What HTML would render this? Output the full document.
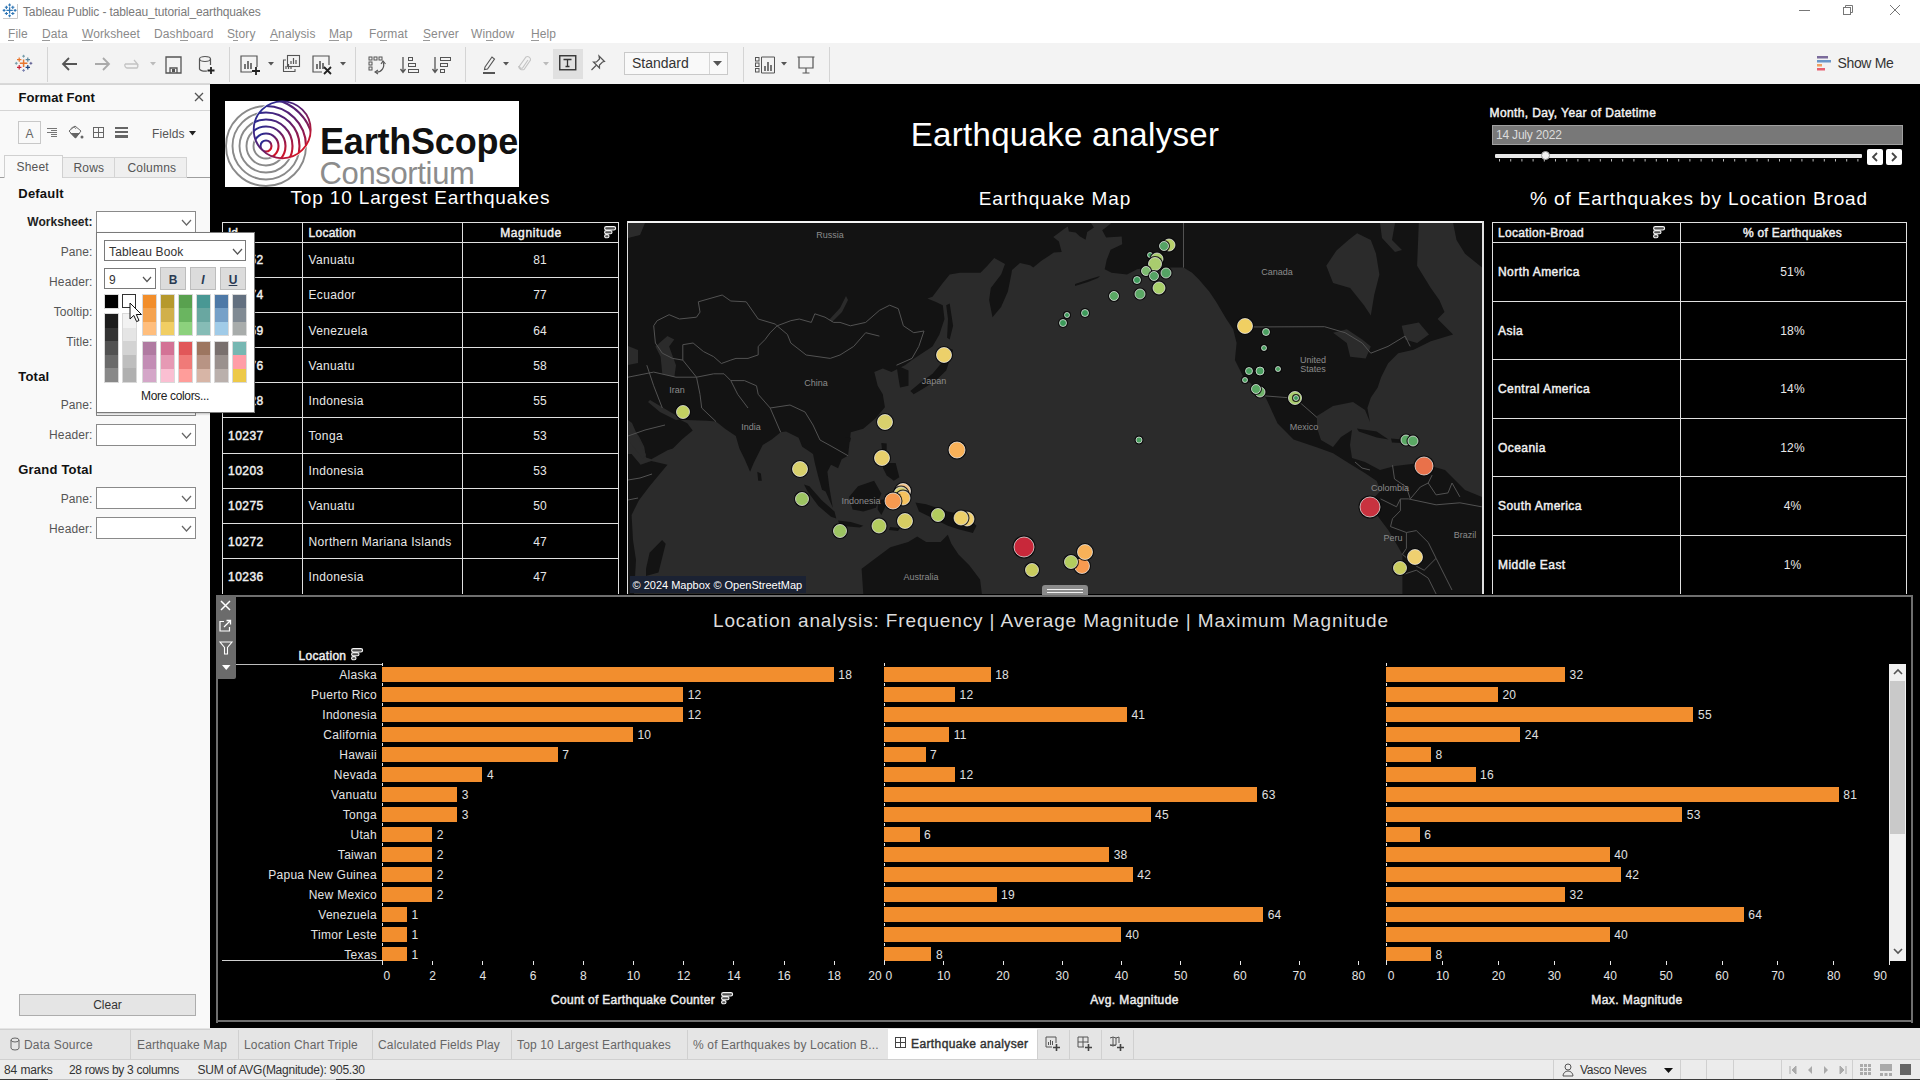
<!DOCTYPE html>
<html><head><meta charset="utf-8"><title>Tableau Public - tableau_tutorial_earthquakes</title>
<style>
html,body{margin:0;padding:0;}
body{width:1920px;height:1080px;overflow:hidden;position:relative;background:#fff;font-family:"Liberation Sans",sans-serif;}
.t{position:absolute;white-space:nowrap;line-height:1;}
.r{position:absolute;}
svg.r{overflow:visible;}
</style></head><body>

<div class="r" style="left:0px;top:0px;width:1920px;height:43px;background:#ffffff;"></div>
<svg class="r" style="left:0px;top:0px;" width="20" height="20" viewBox="0 0 20 20"><path d="M6.3999999999999995 10.4 H12.8 M9.6 7.2 V13.600000000000001" stroke="#2f76b5" stroke-width="1.3"/><path d="M8.2 5 H11.0 M9.6 3.6 V6.4" stroke="#2f76b5" stroke-width="1.1"/><path d="M8.2 15.8 H11.0 M9.6 14.4 V17.2" stroke="#2f76b5" stroke-width="1.1"/><path d="M2.6999999999999997 10.4 H5.5 M4.1 9.0 V11.8" stroke="#2f76b5" stroke-width="1.1"/><path d="M13.7 10.4 H16.5 M15.1 9.0 V11.8" stroke="#2f76b5" stroke-width="1.1"/><path d="M4.800000000000001 7.3 H8.0 M6.4 5.699999999999999 V8.9" stroke="#2f76b5" stroke-width="1.1"/><path d="M11.200000000000001 7.3 H14.4 M12.8 5.699999999999999 V8.9" stroke="#2f76b5" stroke-width="1.1"/><path d="M4.800000000000001 13.5 H8.0 M6.4 11.9 V15.1" stroke="#2f76b5" stroke-width="1.1"/><path d="M11.200000000000001 13.5 H14.4 M12.8 11.9 V15.1" stroke="#2f76b5" stroke-width="1.1"/><path d="M17.5 4 V18.5 H3" fill="none" stroke="#c8c8c8" stroke-width="1"/></svg>
<div class="t" style="top:5.84px;font-size:12px;color:#7a7a7a;letter-spacing:-0.13px;left:23.00px;">Tableau Public - tableau_tutorial_earthquakes</div>
<div class="t" style="top:27.84px;font-size:12px;color:#8a8a8a;letter-spacing:0.1px;left:8.00px;">File</div>
<div class="t" style="top:27.84px;font-size:12px;color:#8a8a8a;letter-spacing:0.1px;left:42.00px;">Data</div>
<div class="t" style="top:27.84px;font-size:12px;color:#8a8a8a;letter-spacing:0.1px;left:82.00px;">Worksheet</div>
<div class="t" style="top:27.84px;font-size:12px;color:#8a8a8a;letter-spacing:0.1px;left:154.00px;">Dashboard</div>
<div class="t" style="top:27.84px;font-size:12px;color:#8a8a8a;letter-spacing:0.1px;left:227.00px;">Story</div>
<div class="t" style="top:27.84px;font-size:12px;color:#8a8a8a;letter-spacing:0.1px;left:270.00px;">Analysis</div>
<div class="t" style="top:27.84px;font-size:12px;color:#8a8a8a;letter-spacing:0.1px;left:329.00px;">Map</div>
<div class="t" style="top:27.84px;font-size:12px;color:#8a8a8a;letter-spacing:0.1px;left:369.00px;">Format</div>
<div class="t" style="top:27.84px;font-size:12px;color:#8a8a8a;letter-spacing:0.1px;left:423.00px;">Server</div>
<div class="t" style="top:27.84px;font-size:12px;color:#8a8a8a;letter-spacing:0.1px;left:471.00px;">Window</div>
<div class="t" style="top:27.84px;font-size:12px;color:#8a8a8a;letter-spacing:0.1px;left:531.00px;">Help</div>
<div class="r" style="left:8px;top:40px;width:6px;height:1px;background:#9a9a9a;"></div>
<div class="r" style="left:42px;top:40px;width:8px;height:1px;background:#9a9a9a;"></div>
<div class="r" style="left:82px;top:40px;width:11px;height:1px;background:#9a9a9a;"></div>
<div class="r" style="left:180px;top:40px;width:8px;height:1px;background:#9a9a9a;"></div>
<div class="r" style="left:233px;top:40px;width:5px;height:1px;background:#9a9a9a;"></div>
<div class="r" style="left:270px;top:40px;width:8px;height:1px;background:#9a9a9a;"></div>
<div class="r" style="left:329px;top:40px;width:10px;height:1px;background:#9a9a9a;"></div>
<div class="r" style="left:380px;top:40px;width:7px;height:1px;background:#9a9a9a;"></div>
<div class="r" style="left:423px;top:40px;width:7px;height:1px;background:#9a9a9a;"></div>
<div class="r" style="left:486px;top:40px;width:7px;height:1px;background:#9a9a9a;"></div>
<div class="r" style="left:531px;top:40px;width:8px;height:1px;background:#9a9a9a;"></div>
<div class="r" style="left:1799px;top:10px;width:11px;height:1px;background:#777;"></div>
<svg class="r" style="left:1843px;top:4px;" width="12" height="12" viewBox="0 0 12 12"><rect x="0.5" y="3.5" width="7" height="7" fill="none" stroke="#777"/><path d="M2.5 3.5 V1.5 H9.5 V8.5 H7.5" fill="none" stroke="#777"/></svg>
<svg class="r" style="left:1889px;top:4px;" width="12" height="12" viewBox="0 0 12 12"><path d="M1 1 L11 11 M11 1 L1 11" stroke="#777" stroke-width="1"/></svg>
<div class="r" style="left:0px;top:43px;width:1920px;height:41px;background:#f3f3f3;"></div>
<div class="r" style="left:0px;top:83px;width:210px;height:1px;background:#d9d9d9;"></div>
<div class="r" style="left:47px;top:47px;width:1px;height:35px;background:#d4d4d4;"></div>
<div class="r" style="left:229px;top:47px;width:1px;height:35px;background:#d4d4d4;"></div>
<div class="r" style="left:355px;top:47px;width:1px;height:35px;background:#d4d4d4;"></div>
<div class="r" style="left:465px;top:47px;width:1px;height:35px;background:#d4d4d4;"></div>
<div class="r" style="left:743px;top:47px;width:1px;height:35px;background:#d4d4d4;"></div>
<div class="r" style="left:829px;top:47px;width:1px;height:35px;background:#d4d4d4;"></div>
<svg class="r" style="left:0px;top:0px;" width="40" height="80" viewBox="0 0 40 80"><path d="M19.8 63.3 H27.400000000000002 M23.6 59.5 V67.1" stroke="#e8762d" stroke-width="1.5"/><path d="M17.0 59.6 H21.4 M19.2 57.4 V61.800000000000004" stroke="#e8762d" stroke-width="1.2"/><path d="M25.6 59.6 H30.0 M27.8 57.4 V61.800000000000004" stroke="#5b879b" stroke-width="1.2"/><path d="M17.0 67.3 H21.4 M19.2 65.1 V69.5" stroke="#c72035" stroke-width="1.2"/><path d="M25.6 67.3 H30.0 M27.8 65.1 V69.5" stroke="#1f447e" stroke-width="1.2"/><path d="M22.200000000000003 56.2 H25.0 M23.6 54.800000000000004 V57.6" stroke="#7199a6" stroke-width="1.0"/><path d="M22.200000000000003 70.4 H25.0 M23.6 69.0 V71.80000000000001" stroke="#7a82b0" stroke-width="1.0"/><path d="M14.9 63.3 H17.7 M16.3 61.9 V64.7" stroke="#7199a6" stroke-width="1.0"/><path d="M29.5 63.3 H32.3 M30.9 61.9 V64.7" stroke="#59598f" stroke-width="1.0"/></svg>
<svg class="r" style="left:61px;top:56px;" width="18" height="16" viewBox="0 0 18 16"><path d="M16 8 H2 M8 2 L2 8 L8 14" fill="none" stroke="#555" stroke-width="1.8"/></svg>
<svg class="r" style="left:93px;top:56px;" width="18" height="16" viewBox="0 0 18 16"><path d="M2 8 H16 M10 2 L16 8 L10 14" fill="none" stroke="#aaa" stroke-width="1.8"/></svg>
<svg class="r" style="left:122px;top:56px;" width="20" height="16" viewBox="0 0 20 16"><path d="M3 8 H15 A3 3 0 0 1 15 12 H5 A3 3 0 0 1 3 8 M12 4 L15.5 8 L12 8" fill="none" stroke="#c4c4c4" stroke-width="1.3"/></svg>
<svg class="r" style="left:150px;top:62px;" width="6" height="4" viewBox="0 0 6 4"><path d="M0 0 H6 L3 3.5Z" fill="#bbb"/></svg>
<svg class="r" style="left:165px;top:56px;" width="18" height="18" viewBox="0 0 18 18"><path d="M1 1 H16 V17 H1 Z M5 17 V12 H12 V17" fill="none" stroke="#555" stroke-width="1.3"/><rect x="7" y="13" width="3" height="3" fill="#555"/></svg>
<svg class="r" style="left:198px;top:55px;" width="18" height="20" viewBox="0 0 18 20"><ellipse cx="7" cy="4" rx="5.5" ry="2.5" fill="none" stroke="#555" stroke-width="1.2"/><path d="M1.5 4 V14 A5.5 2.5 0 0 0 9 16" fill="none" stroke="#555" stroke-width="1.2"/><path d="M12.5 4 V10" stroke="#555" stroke-width="1.2"/><path d="M13 12 V19 M9.5 15.5 H16.5" stroke="#222" stroke-width="1.8"/></svg>
<svg class="r" style="left:240px;top:55px;" width="22" height="20" viewBox="0 0 22 20"><path d="M17 12 V1 H1 V17 H12" fill="none" stroke="#555" stroke-width="1.2"/><path d="M5 14 V9 M8 14 V6 M11 14 V8" stroke="#555" stroke-width="1.6"/><path d="M16 12 V20 M12 16 H20" stroke="#222" stroke-width="1.8"/></svg>
<svg class="r" style="left:268px;top:62px;" width="6" height="4" viewBox="0 0 6 4"><path d="M0 0 H6 L3 3.5Z" fill="#555"/></svg>
<svg class="r" style="left:282px;top:54px;" width="20" height="20" viewBox="0 0 20 20"><rect x="5.5" y="1.5" width="12" height="11" fill="#f3f3f3" stroke="#555" stroke-width="1.1"/><path d="M9 10 V7 M11.5 10 V4 M14 10 V6" stroke="#555" stroke-width="1.2"/><path d="M4 6 H1.5 V17.5 H13 V15" fill="none" stroke="#555" stroke-width="1.1"/><path d="M4 15 V12 M6.5 15 V10 M9 15 V13" stroke="#555" stroke-width="1.2"/></svg>
<svg class="r" style="left:312px;top:55px;" width="22" height="20" viewBox="0 0 22 20"><path d="M17 10 V1 H1 V17 H10" fill="none" stroke="#555" stroke-width="1.2"/><path d="M5 14 V9 M8 14 V6 M11 14 V8" stroke="#555" stroke-width="1.6"/><path d="M12 12 L19 19 M19 12 L12 19" stroke="#222" stroke-width="1.8"/></svg>
<svg class="r" style="left:340px;top:62px;" width="6" height="4" viewBox="0 0 6 4"><path d="M0 0 H6 L3 3.5Z" fill="#555"/></svg>
<svg class="r" style="left:368px;top:56px;" width="20" height="18" viewBox="0 0 20 18"><rect x="1" y="1" width="3" height="3" fill="none" stroke="#555"/><rect x="6" y="1" width="3" height="3" fill="none" stroke="#555"/><rect x="11" y="1" width="3" height="3" fill="none" stroke="#555"/><rect x="1" y="6" width="3" height="3" fill="none" stroke="#555"/><rect x="1" y="11" width="3" height="3" fill="none" stroke="#555"/><path d="M15 6 A7 7 0 0 1 8 16" fill="none" stroke="#555" stroke-width="1.2"/><path d="M13 8 L15 5 L17.5 8 M10 14 L7 16 L10 18" fill="none" stroke="#555" stroke-width="1.1"/></svg>
<svg class="r" style="left:400px;top:56px;" width="20" height="18" viewBox="0 0 20 18"><path d="M3 1 V16 M0.5 13 L3 16.5 L5.5 13" fill="none" stroke="#555" stroke-width="1.3"/><rect x="8.5" y="1.5" width="4" height="3" fill="none" stroke="#555"/><rect x="8.5" y="7.5" width="7" height="3" fill="none" stroke="#555"/><rect x="8.5" y="13.5" width="10" height="3" fill="none" stroke="#555"/></svg>
<svg class="r" style="left:432px;top:56px;" width="20" height="18" viewBox="0 0 20 18"><path d="M3 1 V16 M0.5 13 L3 16.5 L5.5 13" fill="none" stroke="#555" stroke-width="1.3"/><rect x="8.5" y="1.5" width="10" height="3" fill="none" stroke="#555"/><rect x="8.5" y="7.5" width="7" height="3" fill="none" stroke="#555"/><rect x="8.5" y="13.5" width="4" height="3" fill="none" stroke="#555"/></svg>
<svg class="r" style="left:481px;top:55px;" width="16" height="20" viewBox="0 0 16 20"><path d="M4 12 L11 2 L13.5 4 L6.5 14 L3.5 14.5 Z" fill="none" stroke="#555" stroke-width="1.1"/><rect x="2" y="17" width="12" height="2" fill="#555"/></svg>
<svg class="r" style="left:503px;top:62px;" width="6" height="4" viewBox="0 0 6 4"><path d="M0 0 H6 L3 3.5Z" fill="#555"/></svg>
<svg class="r" style="left:518px;top:55px;" width="14" height="18" viewBox="0 0 14 18"><path d="M10 5 L4.5 13 A2 2 0 0 1 1.5 11 L8 2 A3 3 0 0 1 12.5 5 L6 14.5 A4 4 0 0 1 0.5 11" fill="none" stroke="#c4c4c4" stroke-width="1.1"/></svg>
<svg class="r" style="left:543px;top:62px;" width="6" height="4" viewBox="0 0 6 4"><path d="M0 0 H6 L3 3.5Z" fill="#bbb"/></svg>
<div class="r" style="left:553px;top:49px;width:30px;height:30px;background:#e0e0e0;"></div>
<svg class="r" style="left:559px;top:55px;" width="18" height="18" viewBox="0 0 18 18"><rect x="0.75" y="0.75" width="16" height="14" fill="none" stroke="#333" stroke-width="1.4"/><path d="M4.5 4.5 H12.5 M8.5 4.5 V11.5 M6.5 11.5 H10.5" fill="none" stroke="#333" stroke-width="1.3"/></svg>
<svg class="r" style="left:590px;top:55px;" width="16" height="18" viewBox="0 0 16 18"><path d="M9 1 L14.5 6.5 L12.5 7 L9.5 10 L9.5 13 L3.5 7 L6.5 7 L9.5 4 Z M6 10.5 L1.5 15" fill="none" stroke="#555" stroke-width="1.2"/></svg>
<div class="r" style="left:624px;top:52px;width:104px;height:23px;background:#f9f9f9;border:1px solid #c9c9c9;box-sizing:border-box;"></div>
<div class="r" style="left:709px;top:53px;width:1px;height:21px;background:#d5d5d5;"></div>
<div class="t" style="top:56.15px;font-size:14px;color:#333;left:632.00px;">Standard</div>
<svg class="r" style="left:713px;top:61px;" width="10" height="6" viewBox="0 0 10 6"><path d="M0 0 H9 L4.5 5Z" fill="#555"/></svg>
<svg class="r" style="left:755px;top:56px;" width="22" height="18" viewBox="0 0 22 18"><rect x="0.5" y="1.5" width="3.5" height="3.5" fill="none" stroke="#555"/><rect x="0.5" y="7" width="3.5" height="3.5" fill="none" stroke="#555"/><rect x="0.5" y="12.5" width="3.5" height="3.5" fill="none" stroke="#555"/><path d="M6.5 1 V17 H19.5 V1 Z" fill="none" stroke="#555"/><path d="M10 15 V10 M13 15 V6 M16 15 V9" stroke="#555" stroke-width="1.6"/></svg>
<svg class="r" style="left:781px;top:62px;" width="6" height="4" viewBox="0 0 6 4"><path d="M0 0 H6 L3 3.5Z" fill="#555"/></svg>
<svg class="r" style="left:797px;top:56px;" width="18" height="18" viewBox="0 0 18 18"><path d="M0.5 1 H17.5 M2 1 V12 H16 V1 M9 12 V17 M5.5 17 H12.5" fill="none" stroke="#555" stroke-width="1.2"/></svg>
<svg class="r" style="left:1817px;top:56px;" width="16" height="16" viewBox="0 0 16 16"><rect x="0" y="0" width="11" height="2.5" fill="#7b6b9b"/><rect x="0" y="4" width="14" height="2.5" fill="#6b96c8"/><rect x="0" y="8" width="5" height="2.5" fill="#f0a060"/><rect x="0" y="12" width="8" height="2.5" fill="#e86070"/></svg>
<div class="t" style="top:56.15px;font-size:14px;color:#333;letter-spacing:-0.35px;left:1837.50px;">Show Me</div>
<div class="r" style="left:0px;top:84px;width:210px;height:945px;background:#f9f9f9;"></div>
<div class="r" style="left:0px;top:84px;width:210px;height:1px;background:#d6d6d6;"></div>
<div class="t" style="top:91.00px;font-size:13px;font-weight:700;color:#111;letter-spacing:0.05px;left:18.50px;">Format Font</div>
<svg class="r" style="left:194px;top:92px;" width="10" height="10" viewBox="0 0 10 10"><path d="M1 1 L9 9 M9 1 L1 9" stroke="#555" stroke-width="1.3"/></svg>
<div class="r" style="left:0px;top:110px;width:210px;height:1px;background:#d5d5d5;"></div>
<div class="r" style="left:18px;top:121px;width:23px;height:23px;background:#f9f9f9;border:1px solid #c8c8c8;box-sizing:border-box;"></div>
<div class="t" style="top:127.84px;font-size:12px;color:#666;left:29.50px;transform:translateX(-50%);">A</div>
<svg class="r" style="left:47px;top:127px;" width="11" height="11" viewBox="0 0 11 11"><path d="M0 1.5 H10 M4 3.5 H10 M0 5.5 H10 M4 7.5 H10 M4 9.5 H10" stroke="#666" stroke-width="0.9"/></svg>
<svg class="r" style="left:68px;top:125px;" width="16" height="15" viewBox="0 0 16 15"><path d="M1 6 L7 1 L13 6 L7.5 13 Z" fill="none" stroke="#666" stroke-width="1"/><path d="M2 8 H12 L7.5 13.5 Z" fill="#666"/><path d="M2.5 4 Q6 0 8 4" fill="none" stroke="#666" stroke-width="0.8"/><circle cx="14" cy="12" r="1.5" fill="#666"/></svg>
<svg class="r" style="left:93px;top:127px;" width="11" height="11" viewBox="0 0 11 11"><rect x="0.5" y="0.5" width="10" height="10" fill="none" stroke="#666"/><path d="M5.5 0.5 V10.5 M0.5 5.5 H10.5" stroke="#666"/></svg>
<svg class="r" style="left:115px;top:127px;" width="14" height="11" viewBox="0 0 14 11"><rect x="0" y="0" width="13" height="2" fill="#666"/><rect x="0" y="4" width="13" height="2" fill="#666"/><rect x="0" y="8" width="13" height="3" fill="#666"/></svg>
<div class="t" style="top:127.84px;font-size:12px;color:#555;letter-spacing:0.1px;left:152.00px;">Fields</div>
<svg class="r" style="left:189px;top:131px;" width="8" height="5" viewBox="0 0 8 5"><path d="M0 0 H7 L3.5 4.5Z" fill="#222"/></svg>
<div class="r" style="left:0px;top:177px;width:210px;height:1px;background:#9e9e9e;"></div>
<div class="r" style="left:62px;top:157px;width:125px;height:21px;background:#efefef;border:1px solid #d4d4d4;box-sizing:border-box;"></div>
<div class="r" style="left:114px;top:157px;width:1px;height:20px;background:#d4d4d4;"></div>
<div class="r" style="left:4px;top:155px;width:59px;height:23px;background:#f9f9f9;border:1px solid #d0d0d0;box-sizing:border-box;border-bottom:none;"></div>
<div class="t" style="top:160.84px;font-size:12px;color:#555;letter-spacing:0.2px;left:16.50px;">Sheet</div>
<div class="t" style="top:161.84px;font-size:12px;color:#555;letter-spacing:0.2px;left:73.50px;">Rows</div>
<div class="t" style="top:161.84px;font-size:12px;color:#555;letter-spacing:0.2px;left:127.50px;">Columns</div>
<div class="t" style="top:187.00px;font-size:13px;font-weight:700;color:#111;letter-spacing:0.2px;left:18.30px;">Default</div>
<div class="t" style="top:370.00px;font-size:13px;font-weight:700;color:#111;letter-spacing:0.2px;left:18.30px;">Total</div>
<div class="t" style="top:462.50px;font-size:13px;font-weight:700;color:#111;letter-spacing:0.2px;left:18.30px;">Grand Total</div>
<div class="t" style="top:215.84px;font-size:12px;font-weight:700;color:#222;right:1827.50px;">Worksheet:</div>
<div class="t" style="top:245.84px;font-size:12px;color:#555;letter-spacing:0.1px;right:1827.50px;">Pane:</div>
<div class="t" style="top:275.84px;font-size:12px;color:#555;letter-spacing:0.1px;right:1827.50px;">Header:</div>
<div class="t" style="top:305.84px;font-size:12px;color:#555;letter-spacing:0.1px;right:1827.50px;">Tooltip:</div>
<div class="t" style="top:335.84px;font-size:12px;color:#555;letter-spacing:0.1px;right:1827.50px;">Title:</div>
<div class="t" style="top:398.84px;font-size:12px;color:#555;letter-spacing:0.1px;right:1827.50px;">Pane:</div>
<div class="t" style="top:429.34px;font-size:12px;color:#555;letter-spacing:0.1px;right:1827.50px;">Header:</div>
<div class="t" style="top:492.84px;font-size:12px;color:#555;letter-spacing:0.1px;right:1827.50px;">Pane:</div>
<div class="t" style="top:522.84px;font-size:12px;color:#555;letter-spacing:0.1px;right:1827.50px;">Header:</div>
<div class="r" style="left:96px;top:211px;width:100px;height:22px;background:#fff;border:1px solid #8a8a8a;box-sizing:border-box;"></div>
<svg class="r" style="left:181px;top:219px;" width="11" height="7" viewBox="0 0 11 7"><path d="M1 1 L5.5 6 L10 1" fill="none" stroke="#666" stroke-width="1.2"/></svg>
<div class="r" style="left:96px;top:424px;width:100px;height:22px;background:#fff;border:1px solid #8a8a8a;box-sizing:border-box;"></div>
<svg class="r" style="left:181px;top:432px;" width="11" height="7" viewBox="0 0 11 7"><path d="M1 1 L5.5 6 L10 1" fill="none" stroke="#666" stroke-width="1.2"/></svg>
<div class="r" style="left:96px;top:487px;width:100px;height:22px;background:#fff;border:1px solid #8a8a8a;box-sizing:border-box;"></div>
<svg class="r" style="left:181px;top:495px;" width="11" height="7" viewBox="0 0 11 7"><path d="M1 1 L5.5 6 L10 1" fill="none" stroke="#666" stroke-width="1.2"/></svg>
<div class="r" style="left:96px;top:517px;width:100px;height:22px;background:#fff;border:1px solid #8a8a8a;box-sizing:border-box;"></div>
<svg class="r" style="left:181px;top:525px;" width="11" height="7" viewBox="0 0 11 7"><path d="M1 1 L5.5 6 L10 1" fill="none" stroke="#666" stroke-width="1.2"/></svg>
<div class="r" style="left:96px;top:394px;width:100px;height:22px;background:#fff;border:1px solid #8a8a8a;box-sizing:border-box;"></div>
<div class="r" style="left:19px;top:994px;width:177px;height:22px;background:#e5e5e5;border:1px solid #adadad;box-sizing:border-box;"></div>
<div class="t" style="top:999.34px;font-size:12px;color:#333;left:107.50px;transform:translateX(-50%);">Clear</div>
<div class="r" style="left:0px;top:1028px;width:1920px;height:31px;background:#e5e5e5;"></div>
<div class="r" style="left:0px;top:1029px;width:210px;height:1px;background:#d0d0d0;"></div>
<div class="r" style="left:0px;top:1059px;width:1920px;height:1px;background:#d0d0d0;"></div>
<div class="r" style="left:0px;top:1060px;width:1920px;height:20px;background:#ececec;"></div>
<svg class="r" style="left:10px;top:1037px;" width="10" height="14" viewBox="0 0 10 14"><path d="M1 3 A4 2 0 0 1 9 3 V11 A4 2 0 0 1 1 11 Z M1 3 A4 2 0 0 0 9 3" fill="none" stroke="#666" stroke-width="1"/></svg>
<div class="t" style="top:1038.84px;font-size:12px;color:#666;letter-spacing:0.2px;left:24.00px;">Data Source</div>
<div class="r" style="left:130px;top:1030px;width:1px;height:29px;background:#d0d0d0;"></div>
<div class="r" style="left:238px;top:1030px;width:1px;height:29px;background:#d0d0d0;"></div>
<div class="r" style="left:372px;top:1030px;width:1px;height:29px;background:#d0d0d0;"></div>
<div class="r" style="left:511px;top:1030px;width:1px;height:29px;background:#d0d0d0;"></div>
<div class="r" style="left:687px;top:1030px;width:1px;height:29px;background:#d0d0d0;"></div>
<div class="r" style="left:888px;top:1030px;width:1px;height:29px;background:#d0d0d0;"></div>
<div class="r" style="left:1037px;top:1030px;width:1px;height:29px;background:#d0d0d0;"></div>
<div class="r" style="left:1069px;top:1030px;width:1px;height:29px;background:#d0d0d0;"></div>
<div class="r" style="left:1101px;top:1030px;width:1px;height:29px;background:#d0d0d0;"></div>
<div class="r" style="left:1133px;top:1030px;width:1px;height:29px;background:#d0d0d0;"></div>
<div class="t" style="top:1038.84px;font-size:12px;color:#666;letter-spacing:0.15px;left:137.00px;">Earthquake Map</div>
<div class="t" style="top:1038.84px;font-size:12px;color:#666;letter-spacing:0.15px;left:244.00px;">Location Chart Triple</div>
<div class="t" style="top:1038.84px;font-size:12px;color:#666;letter-spacing:0.15px;left:378.00px;">Calculated Fields Play</div>
<div class="t" style="top:1038.84px;font-size:12px;color:#666;letter-spacing:0.15px;left:517.00px;">Top 10 Largest Earthquakes</div>
<div class="t" style="top:1038.84px;font-size:12px;color:#666;letter-spacing:0.15px;left:693.00px;">% of Earthquakes by Location B...</div>
<div class="r" style="left:888px;top:1029px;width:149px;height:30px;background:#ffffff;"></div>
<svg class="r" style="left:895px;top:1037px;" width="12" height="12" viewBox="0 0 12 12"><rect x="0.5" y="0.5" width="10" height="10" fill="none" stroke="#444"/><path d="M5.5 0.5 V10.5 M0.5 5.5 H10.5" stroke="#444"/></svg>
<div class="t" style="top:1037.84px;font-size:12px;color:#333;letter-spacing:0.39px;left:911.00px;-webkit-text-stroke:0.45px currentColor;">Earthquake analyser</div>
<svg class="r" style="left:1045px;top:1036px;" width="16" height="16" viewBox="0 0 16 16"><path d="M11 7 V1 H1 V11 H7" fill="none" stroke="#555"/><path d="M3.5 9 V6 M5.5 9 V4 M7.5 9 V5" stroke="#555"/><path d="M11.5 8 V15 M8 11.5 H15" stroke="#444" stroke-width="1.6"/></svg>
<svg class="r" style="left:1077px;top:1036px;" width="16" height="16" viewBox="0 0 16 16"><path d="M11 7 V1 H1 V11 H7 M1 6 H11 M6 1 V11" fill="none" stroke="#555"/><path d="M11.5 8 V15 M8 11.5 H15" stroke="#444" stroke-width="1.6"/></svg>
<svg class="r" style="left:1109px;top:1036px;" width="16" height="16" viewBox="0 0 16 16"><path d="M1 2 L4 1 L7 2 L10 1 V7 M7 9 L4 10 L1 9 Z M4 1 V10 M7 2 V9" fill="none" stroke="#555"/><path d="M11.5 8 V15 M8 11.5 H15" stroke="#444" stroke-width="1.6"/></svg>
<div class="t" style="top:1063.84px;font-size:12px;color:#333;letter-spacing:-0.1px;left:4.00px;">84 marks</div>
<div class="t" style="top:1063.84px;font-size:12px;color:#333;letter-spacing:-0.3px;left:69.00px;">28 rows by 3 columns</div>
<div class="t" style="top:1063.84px;font-size:12px;color:#333;letter-spacing:-0.25px;left:197.50px;">SUM of AVG(Magnitude): 905.30</div>
<div class="r" style="left:1553px;top:1060px;width:1px;height:20px;background:#d0d0d0;"></div>
<div class="r" style="left:1680px;top:1060px;width:1px;height:20px;background:#d0d0d0;"></div>
<div class="r" style="left:1706px;top:1060px;width:1px;height:20px;background:#d0d0d0;"></div>
<div class="r" style="left:1733px;top:1060px;width:1px;height:20px;background:#d0d0d0;"></div>
<div class="r" style="left:1781px;top:1060px;width:1px;height:20px;background:#d0d0d0;"></div>
<div class="r" style="left:1852px;top:1060px;width:1px;height:20px;background:#d0d0d0;"></div>
<svg class="r" style="left:1562px;top:1063px;" width="12" height="14" viewBox="0 0 12 14"><circle cx="6" cy="4" r="3" fill="none" stroke="#555"/><path d="M1 13 A5 5 0 0 1 11 13 Z" fill="none" stroke="#555"/></svg>
<div class="t" style="top:1063.84px;font-size:12px;color:#333;letter-spacing:-0.3px;left:1580.00px;">Vasco Neves</div>
<svg class="r" style="left:1664px;top:1068px;" width="9" height="5" viewBox="0 0 9 5"><path d="M0 0 H9 L4.5 5Z" fill="#111"/></svg>
<svg class="r" style="left:1789px;top:1065px;" width="60" height="10" viewBox="0 0 60 10"><path d="M1 1 V9 M7 1 L3 5 L7 9 Z" fill="#aaa" stroke="#aaa"/><path d="M23 1 L19 5 L23 9 Z" fill="#aaa"/><path d="M35 1 L39 5 L35 9 Z" fill="#aaa"/><path d="M51 1 L55 5 L51 9 Z M57 1 V9" fill="#aaa" stroke="#aaa"/></svg>
<svg class="r" style="left:1860px;top:1064px;" width="12" height="12" viewBox="0 0 12 12"><rect x="0" y="0" width="3" height="3" fill="#aaa"/><rect x="0" y="4" width="3" height="3" fill="#aaa"/><rect x="0" y="8" width="3" height="3" fill="#aaa"/><rect x="4" y="0" width="3" height="3" fill="#aaa"/><rect x="4" y="4" width="3" height="3" fill="#aaa"/><rect x="4" y="8" width="3" height="3" fill="#aaa"/><rect x="8" y="0" width="3" height="3" fill="#aaa"/><rect x="8" y="4" width="3" height="3" fill="#aaa"/><rect x="8" y="8" width="3" height="3" fill="#aaa"/></svg>
<svg class="r" style="left:1880px;top:1064px;" width="12" height="12" viewBox="0 0 12 12"><rect x="0" y="0" width="12" height="7" fill="#aaa"/><rect x="0" y="9" width="3" height="3" fill="#aaa"/><rect x="4.5" y="9" width="3" height="3" fill="#aaa"/><rect x="9" y="9" width="3" height="3" fill="#aaa"/></svg>
<div class="r" style="left:1900px;top:1064px;width:11px;height:11px;background:#666;"></div>
<div class="r" style="left:0px;top:1079px;width:1920px;height:1px;background:#3c3c3c;"></div>
<div class="r" style="left:48px;top:1079px;width:288px;height:1px;background:#c4c4c4;"></div>
<div class="r" style="left:210px;top:84px;width:1710px;height:944px;background:#000000;"></div>
<div class="r" style="left:225px;top:101px;width:294px;height:86px;background:#ffffff;"></div>
<svg class="r" style="left:225px;top:101px;" width="100" height="86" viewBox="0 0 100 86"><defs><linearGradient id="lg" x1="0" y1="0" x2="1" y2="1"><stop offset="0.1" stop-color="#222c96"/><stop offset="0.5" stop-color="#5e1f6e"/><stop offset="0.9" stop-color="#e0141e"/></linearGradient><clipPath id="cin"><circle cx="57.19999999999999" cy="28.80000000000001" r="28.5"/></clipPath><mask id="mout"><rect x="0" y="0" width="100" height="86" fill="#fff"/><circle cx="57.19999999999999" cy="28.80000000000001" r="30.0" fill="#000"/></mask></defs><g transform="translate(-225,-101)"><g mask="url(#mout)" transform="translate(225,101)"><g transform="translate(-225,-101)"><circle cx="266" cy="146" r="5.5" fill="none" stroke="#8a8a8a" stroke-width="1.9"/><circle cx="266" cy="146" r="12.5" fill="none" stroke="#8a8a8a" stroke-width="1.9"/><circle cx="266" cy="146" r="19.5" fill="none" stroke="#8a8a8a" stroke-width="1.9"/><circle cx="266" cy="146" r="26.5" fill="none" stroke="#8a8a8a" stroke-width="1.9"/><circle cx="266" cy="146" r="33.5" fill="none" stroke="#8a8a8a" stroke-width="1.9"/><circle cx="266" cy="146" r="40" fill="none" stroke="#8a8a8a" stroke-width="1.9"/></g></g></g><g clip-path="url(#cin)"><g transform="translate(-225,-101)"><circle cx="266" cy="146" r="5.5" fill="none" stroke="url(#lg)" stroke-width="2.1"/><circle cx="266" cy="146" r="12.5" fill="none" stroke="url(#lg)" stroke-width="2.1"/><circle cx="266" cy="146" r="19.5" fill="none" stroke="url(#lg)" stroke-width="2.1"/><circle cx="266" cy="146" r="26.5" fill="none" stroke="url(#lg)" stroke-width="2.1"/><circle cx="266" cy="146" r="33.5" fill="none" stroke="url(#lg)" stroke-width="2.1"/><circle cx="266" cy="146" r="40" fill="none" stroke="url(#lg)" stroke-width="2.1"/><circle cx="266" cy="146" r="47" fill="none" stroke="url(#lg)" stroke-width="2.1"/><circle cx="266" cy="146" r="54" fill="none" stroke="url(#lg)" stroke-width="2.1"/></g></g><circle cx="57.19999999999999" cy="28.80000000000001" r="28.5" fill="none" stroke="url(#lg)" stroke-width="1.8"/></svg>
<div class="t" style="top:124.13px;font-size:36px;font-weight:700;color:#111;letter-spacing:-0.2px;left:320.00px;">EarthScope</div>
<div class="t" style="top:158.06px;font-size:31px;color:#8c8c8c;letter-spacing:-0.35px;left:319.50px;">Consortium</div>
<div class="t" style="top:118.07px;font-size:33px;color:#ffffff;letter-spacing:0.3px;left:1065.00px;transform:translateX(-50%);">Earthquake analyser</div>
<div class="t" style="top:107.34px;font-size:12px;color:#f2f2f2;letter-spacing:0.39px;left:1489.50px;-webkit-text-stroke:0.45px currentColor;">Month, Day, Year of Datetime</div>
<div class="r" style="left:1492px;top:125px;width:411px;height:20px;background:#787878;border:1px solid #a0a0a0;box-sizing:border-box;"></div>
<div class="t" style="top:129.34px;font-size:12px;color:#dcdcdc;letter-spacing:-0.2px;left:1496.00px;">14 July 2022</div>
<div class="r" style="left:1495px;top:154px;width:367px;height:4px;background:#e8e8e8;border-radius:1px;"></div>
<svg class="r" style="left:1495px;top:159px;" width="372" height="4" viewBox="0 0 372 4"><rect x="4.0" y="0" width="1" height="2.5" fill="#bbb"/><rect x="15.2" y="0" width="1" height="2.5" fill="#bbb"/><rect x="26.4" y="0" width="1" height="2.5" fill="#bbb"/><rect x="37.6" y="0" width="1" height="2.5" fill="#bbb"/><rect x="48.8" y="0" width="1" height="2.5" fill="#bbb"/><rect x="60.0" y="0" width="1" height="2.5" fill="#bbb"/><rect x="71.2" y="0" width="1" height="2.5" fill="#bbb"/><rect x="82.4" y="0" width="1" height="2.5" fill="#bbb"/><rect x="93.6" y="0" width="1" height="2.5" fill="#bbb"/><rect x="104.8" y="0" width="1" height="2.5" fill="#bbb"/><rect x="116.0" y="0" width="1" height="2.5" fill="#bbb"/><rect x="127.2" y="0" width="1" height="2.5" fill="#bbb"/><rect x="138.4" y="0" width="1" height="2.5" fill="#bbb"/><rect x="149.6" y="0" width="1" height="2.5" fill="#bbb"/><rect x="160.8" y="0" width="1" height="2.5" fill="#bbb"/><rect x="172.0" y="0" width="1" height="2.5" fill="#bbb"/><rect x="183.2" y="0" width="1" height="2.5" fill="#bbb"/><rect x="194.4" y="0" width="1" height="2.5" fill="#bbb"/><rect x="205.6" y="0" width="1" height="2.5" fill="#bbb"/><rect x="216.8" y="0" width="1" height="2.5" fill="#bbb"/><rect x="228.0" y="0" width="1" height="2.5" fill="#bbb"/><rect x="239.2" y="0" width="1" height="2.5" fill="#bbb"/><rect x="250.4" y="0" width="1" height="2.5" fill="#bbb"/><rect x="261.6" y="0" width="1" height="2.5" fill="#bbb"/><rect x="272.8" y="0" width="1" height="2.5" fill="#bbb"/><rect x="284.0" y="0" width="1" height="2.5" fill="#bbb"/><rect x="295.2" y="0" width="1" height="2.5" fill="#bbb"/><rect x="306.4" y="0" width="1" height="2.5" fill="#bbb"/><rect x="317.6" y="0" width="1" height="2.5" fill="#bbb"/><rect x="328.8" y="0" width="1" height="2.5" fill="#bbb"/><rect x="340.0" y="0" width="1" height="2.5" fill="#bbb"/><rect x="351.2" y="0" width="1" height="2.5" fill="#bbb"/><rect x="362.4" y="0" width="1" height="2.5" fill="#bbb"/></svg>
<div class="r" style="left:1541px;top:151px;width:9px;height:9px;border-radius:50%;background:#f3f3f3;border:1px solid #999;box-sizing:border-box;"></div>
<div class="r" style="left:1867px;top:149px;width:16px;height:16px;background:#ffffff;border-radius:2px;"></div>
<svg class="r" style="left:1871px;top:152px;" width="8" height="10" viewBox="0 0 8 10"><path d="M6 1 L2 5 L6 9" fill="none" stroke="#444" stroke-width="1.8"/></svg>
<div class="r" style="left:1886px;top:149px;width:16px;height:16px;background:#ffffff;border-radius:2px;"></div>
<svg class="r" style="left:1890px;top:152px;" width="8" height="10" viewBox="0 0 8 10"><path d="M2 1 L6 5 L2 9" fill="none" stroke="#444" stroke-width="1.8"/></svg>
<div class="t" style="top:188.42px;font-size:19px;color:#ffffff;letter-spacing:0.85px;left:290.50px;">Top 10 Largest Earthquakes</div>
<div class="t" style="top:188.72px;font-size:19px;color:#ffffff;letter-spacing:0.95px;left:1055.00px;transform:translateX(-50%);">Earthquake Map</div>
<div class="t" style="top:188.72px;font-size:19px;color:#ffffff;letter-spacing:0.87px;left:1699.00px;transform:translateX(-50%);">% of Earthquakes by Location Broad</div>
<div class="r" style="left:222px;top:222px;width:397px;height:1px;background:#e0e0e0;"></div>
<div class="r" style="left:222px;top:222px;width:1px;height:372px;background:#e0e0e0;"></div>
<div class="r" style="left:302px;top:222px;width:1px;height:372px;background:#e0e0e0;"></div>
<div class="r" style="left:462px;top:222px;width:1px;height:372px;background:#e0e0e0;"></div>
<div class="r" style="left:618px;top:222px;width:1px;height:372px;background:#e0e0e0;"></div>
<div class="r" style="left:222px;top:242px;width:397px;height:1px;background:#e0e0e0;"></div>
<div class="r" style="left:222px;top:277px;width:397px;height:1px;background:#e0e0e0;"></div>
<div class="r" style="left:222px;top:312px;width:397px;height:1px;background:#e0e0e0;"></div>
<div class="r" style="left:222px;top:347px;width:397px;height:1px;background:#e0e0e0;"></div>
<div class="r" style="left:222px;top:382px;width:397px;height:1px;background:#e0e0e0;"></div>
<div class="r" style="left:222px;top:417px;width:397px;height:1px;background:#e0e0e0;"></div>
<div class="r" style="left:222px;top:453px;width:397px;height:1px;background:#e0e0e0;"></div>
<div class="r" style="left:222px;top:488px;width:397px;height:1px;background:#e0e0e0;"></div>
<div class="r" style="left:222px;top:523px;width:397px;height:1px;background:#e0e0e0;"></div>
<div class="r" style="left:222px;top:558px;width:397px;height:1px;background:#e0e0e0;"></div>
<div class="t" style="top:226.84px;font-size:12px;color:#f0f0f0;letter-spacing:0.27px;left:308.50px;-webkit-text-stroke:0.45px currentColor;">Location</div>
<div class="t" style="top:226.84px;font-size:12px;color:#f0f0f0;letter-spacing:0.62px;left:531.00px;transform:translateX(-50%);-webkit-text-stroke:0.45px currentColor;">Magnitude</div>
<div class="t" style="top:226.84px;font-size:12px;color:#f0f0f0;left:228.00px;-webkit-text-stroke:0.45px currentColor;">Id</div>
<svg class="r" style="left:604px;top:226px;" width="13" height="13" viewBox="0 0 13 13"><rect x="0.6" y="0.6" width="11" height="3.4" rx="1.7" fill="#555" stroke="#f4f4f4" stroke-width="1.1"/><rect x="0.6" y="4.6" width="7.4" height="3.2" rx="1.6" fill="#555" stroke="#f4f4f4" stroke-width="1.1"/><rect x="0.6" y="8.6" width="4.4" height="3.2" rx="1.6" fill="#555" stroke="#f4f4f4" stroke-width="1.1"/></svg>
<div class="t" style="top:254.34px;font-size:12px;color:#f0f0f0;letter-spacing:0.46px;left:228.00px;-webkit-text-stroke:0.45px currentColor;">10252</div>
<div class="t" style="top:254.34px;font-size:12px;color:#e8e8e8;letter-spacing:0.35px;left:308.50px;">Vanuatu</div>
<div class="t" style="top:254.34px;font-size:12px;color:#e8e8e8;letter-spacing:0.2px;left:540.00px;transform:translateX(-50%);">81</div>
<div class="t" style="top:289.49px;font-size:12px;color:#f0f0f0;letter-spacing:0.46px;left:228.00px;-webkit-text-stroke:0.45px currentColor;">10274</div>
<div class="t" style="top:289.49px;font-size:12px;color:#e8e8e8;letter-spacing:0.35px;left:308.50px;">Ecuador</div>
<div class="t" style="top:289.49px;font-size:12px;color:#e8e8e8;letter-spacing:0.2px;left:540.00px;transform:translateX(-50%);">77</div>
<div class="t" style="top:324.64px;font-size:12px;color:#f0f0f0;letter-spacing:0.46px;left:228.00px;-webkit-text-stroke:0.45px currentColor;">10259</div>
<div class="t" style="top:324.64px;font-size:12px;color:#e8e8e8;letter-spacing:0.35px;left:308.50px;">Venezuela</div>
<div class="t" style="top:324.64px;font-size:12px;color:#e8e8e8;letter-spacing:0.2px;left:540.00px;transform:translateX(-50%);">64</div>
<div class="t" style="top:359.79px;font-size:12px;color:#f0f0f0;letter-spacing:0.46px;left:228.00px;-webkit-text-stroke:0.45px currentColor;">10276</div>
<div class="t" style="top:359.79px;font-size:12px;color:#e8e8e8;letter-spacing:0.35px;left:308.50px;">Vanuatu</div>
<div class="t" style="top:359.79px;font-size:12px;color:#e8e8e8;letter-spacing:0.2px;left:540.00px;transform:translateX(-50%);">58</div>
<div class="t" style="top:394.94px;font-size:12px;color:#f0f0f0;letter-spacing:0.46px;left:228.00px;-webkit-text-stroke:0.45px currentColor;">10228</div>
<div class="t" style="top:394.94px;font-size:12px;color:#e8e8e8;letter-spacing:0.35px;left:308.50px;">Indonesia</div>
<div class="t" style="top:394.94px;font-size:12px;color:#e8e8e8;letter-spacing:0.2px;left:540.00px;transform:translateX(-50%);">55</div>
<div class="t" style="top:430.09px;font-size:12px;color:#f0f0f0;letter-spacing:0.46px;left:228.00px;-webkit-text-stroke:0.45px currentColor;">10237</div>
<div class="t" style="top:430.09px;font-size:12px;color:#e8e8e8;letter-spacing:0.35px;left:308.50px;">Tonga</div>
<div class="t" style="top:430.09px;font-size:12px;color:#e8e8e8;letter-spacing:0.2px;left:540.00px;transform:translateX(-50%);">53</div>
<div class="t" style="top:465.24px;font-size:12px;color:#f0f0f0;letter-spacing:0.46px;left:228.00px;-webkit-text-stroke:0.45px currentColor;">10203</div>
<div class="t" style="top:465.24px;font-size:12px;color:#e8e8e8;letter-spacing:0.35px;left:308.50px;">Indonesia</div>
<div class="t" style="top:465.24px;font-size:12px;color:#e8e8e8;letter-spacing:0.2px;left:540.00px;transform:translateX(-50%);">53</div>
<div class="t" style="top:500.39px;font-size:12px;color:#f0f0f0;letter-spacing:0.46px;left:228.00px;-webkit-text-stroke:0.45px currentColor;">10275</div>
<div class="t" style="top:500.39px;font-size:12px;color:#e8e8e8;letter-spacing:0.35px;left:308.50px;">Vanuatu</div>
<div class="t" style="top:500.39px;font-size:12px;color:#e8e8e8;letter-spacing:0.2px;left:540.00px;transform:translateX(-50%);">50</div>
<div class="t" style="top:535.54px;font-size:12px;color:#f0f0f0;letter-spacing:0.46px;left:228.00px;-webkit-text-stroke:0.45px currentColor;">10272</div>
<div class="t" style="top:535.54px;font-size:12px;color:#e8e8e8;letter-spacing:0.35px;left:308.50px;">Northern Mariana Islands</div>
<div class="t" style="top:535.54px;font-size:12px;color:#e8e8e8;letter-spacing:0.2px;left:540.00px;transform:translateX(-50%);">47</div>
<div class="t" style="top:570.69px;font-size:12px;color:#f0f0f0;letter-spacing:0.46px;left:228.00px;-webkit-text-stroke:0.45px currentColor;">10236</div>
<div class="t" style="top:570.69px;font-size:12px;color:#e8e8e8;letter-spacing:0.35px;left:308.50px;">Indonesia</div>
<div class="t" style="top:570.69px;font-size:12px;color:#e8e8e8;letter-spacing:0.2px;left:540.00px;transform:translateX(-50%);">47</div>
<div class="r" style="left:1492px;top:222px;width:415px;height:1px;background:#e0e0e0;"></div>
<div class="r" style="left:1492px;top:222px;width:1px;height:372px;background:#e0e0e0;"></div>
<div class="r" style="left:1680px;top:222px;width:1px;height:372px;background:#e0e0e0;"></div>
<div class="r" style="left:1906px;top:222px;width:1px;height:372px;background:#e0e0e0;"></div>
<div class="r" style="left:1492px;top:242px;width:415px;height:1px;background:#e0e0e0;"></div>
<div class="r" style="left:1492px;top:301px;width:415px;height:1px;background:#e0e0e0;"></div>
<div class="r" style="left:1492px;top:359px;width:415px;height:1px;background:#e0e0e0;"></div>
<div class="r" style="left:1492px;top:418px;width:415px;height:1px;background:#e0e0e0;"></div>
<div class="r" style="left:1492px;top:476px;width:415px;height:1px;background:#e0e0e0;"></div>
<div class="r" style="left:1492px;top:535px;width:415px;height:1px;background:#e0e0e0;"></div>
<div class="t" style="top:227.34px;font-size:12px;color:#f0f0f0;letter-spacing:0.33px;left:1498.00px;-webkit-text-stroke:0.45px currentColor;">Location-Broad</div>
<svg class="r" style="left:1653px;top:226px;" width="13" height="13" viewBox="0 0 13 13"><rect x="0.6" y="0.6" width="11" height="3.4" rx="1.7" fill="#555" stroke="#f4f4f4" stroke-width="1.1"/><rect x="0.6" y="4.6" width="7.4" height="3.2" rx="1.6" fill="#555" stroke="#f4f4f4" stroke-width="1.1"/><rect x="0.6" y="8.6" width="4.4" height="3.2" rx="1.6" fill="#555" stroke="#f4f4f4" stroke-width="1.1"/></svg>
<div class="t" style="top:227.34px;font-size:12px;color:#f0f0f0;letter-spacing:0.27px;left:1792.50px;transform:translateX(-50%);-webkit-text-stroke:0.45px currentColor;">% of Earthquakes</div>
<div class="t" style="top:266.14px;font-size:12px;color:#f0f0f0;letter-spacing:0.45px;left:1498.00px;-webkit-text-stroke:0.45px currentColor;">North America</div>
<div class="t" style="top:266.14px;font-size:12px;color:#e8e8e8;letter-spacing:0.1px;left:1792.50px;transform:translateX(-50%);">51%</div>
<div class="t" style="top:324.64px;font-size:12px;color:#f0f0f0;letter-spacing:0.45px;left:1498.00px;-webkit-text-stroke:0.45px currentColor;">Asia</div>
<div class="t" style="top:324.64px;font-size:12px;color:#e8e8e8;letter-spacing:0.1px;left:1792.50px;transform:translateX(-50%);">18%</div>
<div class="t" style="top:383.14px;font-size:12px;color:#f0f0f0;letter-spacing:0.45px;left:1498.00px;-webkit-text-stroke:0.45px currentColor;">Central America</div>
<div class="t" style="top:383.14px;font-size:12px;color:#e8e8e8;letter-spacing:0.1px;left:1792.50px;transform:translateX(-50%);">14%</div>
<div class="t" style="top:441.64px;font-size:12px;color:#f0f0f0;letter-spacing:0.45px;left:1498.00px;-webkit-text-stroke:0.45px currentColor;">Oceania</div>
<div class="t" style="top:441.64px;font-size:12px;color:#e8e8e8;letter-spacing:0.1px;left:1792.50px;transform:translateX(-50%);">12%</div>
<div class="t" style="top:500.14px;font-size:12px;color:#f0f0f0;letter-spacing:0.45px;left:1498.00px;-webkit-text-stroke:0.45px currentColor;">South America</div>
<div class="t" style="top:500.14px;font-size:12px;color:#e8e8e8;letter-spacing:0.1px;left:1792.50px;transform:translateX(-50%);">4%</div>
<div class="t" style="top:559.14px;font-size:12px;color:#f0f0f0;letter-spacing:0.45px;left:1498.00px;-webkit-text-stroke:0.45px currentColor;">Middle East</div>
<div class="t" style="top:559.14px;font-size:12px;color:#e8e8e8;letter-spacing:0.1px;left:1792.50px;transform:translateX(-50%);">1%</div>
<svg class="r" style="left:628px;top:223px;overflow:hidden" width="854" height="371" viewBox="0 0 854 371"><rect x="0" y="0" width="854" height="371" fill="#2b2b2b"/><polygon points="0.0,0.0 463.0,0.0 465.9,4.6 459.2,9.0 457.6,16.8 452.0,13.4 447.6,9.6 440.9,8.4 439.8,3.4 436.4,5.7 425.3,14.0 430.9,18.4 433.7,29.0 425.9,29.6 413.1,37.9 405.3,44.6 402.0,42.3 392.0,40.0 384.0,47.0 383.3,51.4 379.9,68.5 373.1,84.0 364.5,94.2 361.1,77.1 362.8,65.1 373.1,51.4 377.0,41.0 366.2,35.1 359.4,42.8 352.5,49.7 332.0,49.7 321.7,51.4 314.8,60.0 304.5,73.7 299.4,75.4 308.0,79.0 314.8,82.2 316.5,96.0 311.4,111.4 304.5,123.4 294.2,130.2 284.0,137.0 277.0,142.2 263.4,149.0 254.8,145.6 246.3,149.0 249.7,162.8 254.8,171.3 256.9,184.2 247.9,195.0 235.3,205.7 222.8,209.3 220.0,232.7 213.7,236.3 210.1,245.2 203.0,241.7 199.4,248.8 201.2,263.2 204.8,284.8 197.6,268.6 194.0,266.8 190.4,254.2 186.8,239.9 185.0,230.9 179.6,227.3 174.2,223.7 170.6,214.7 158.0,208.4 152.7,209.3 143.7,216.5 134.7,221.9 125.7,239.9 122.1,248.8 116.7,236.3 111.4,225.5 107.8,212.9 97.0,205.7 88.0,198.6 79.0,197.7 52.0,196.8 59.3,200.3 64.7,207.5 53.9,216.5 44.9,225.5 39.5,227.3 23.3,236.3 18.0,234.5 16.2,223.7 10.8,213.0 0.0,200.0" fill="#131313"/><polygon points="0.0,230.9 3.6,230.9 12.6,241.7 23.3,238.1 39.5,241.7 30.5,252.4 21.6,263.2 10.8,277.6 3.6,291.9 5.0,317.0 8.0,337.0 6.0,371.0 0.0,371.0" fill="#131313"/><polygon points="268.5,142.2 280.5,147.4 280.5,162.8 272.0,164.5 270.3,154.2" fill="#131313"/><polygon points="314.8,123.4 325.1,126.8 318.2,147.4 308.0,157.6 294.2,166.2 285.7,171.3 282.3,168.0 292.5,159.4 304.5,150.8 313.1,140.5" fill="#131313"/><polygon points="318.2,82.2 321.7,80.5 325.1,102.8 321.7,116.5 319.1,114.8 320.0,96.0" fill="#131313"/><polygon points="217.0,214.7 223.0,214.7 222.0,219.0 217.0,219.0" fill="#131313"/><polygon points="253.3,220.1 258.7,220.5 258.7,227.3 254.0,227.0" fill="#131313"/><polygon points="255.1,239.9 267.7,239.9 271.3,254.2 265.9,257.8 258.7,252.4 255.1,245.2" fill="#131313"/><polygon points="176.0,261.4 181.4,263.2 194.0,277.6 206.5,288.4 208.3,295.5 203.0,293.7 190.4,283.0 179.6,268.6" fill="#131313"/><polygon points="210.0,297.5 222.8,299.1 235.3,302.7 231.8,304.5 212.0,302.7" fill="#131313"/><polygon points="221.0,274.0 230.0,263.2 246.1,257.8 253.3,270.4 247.9,284.8 235.3,288.4 224.6,286.6" fill="#131313"/><polygon points="249.7,277.6 258.7,275.8 256.9,284.8 253.3,292.0 249.7,286.6" fill="#131313"/><polygon points="287.4,279.4 298.2,281.2 319.8,288.4 337.7,292.0 348.5,302.7 344.9,309.9 330.5,306.3 319.8,302.7 305.4,295.5 291.0,288.4" fill="#131313"/><polygon points="262.0,304.0 272.0,305.0 270.0,308.0 261.0,307.0" fill="#131313"/><polygon points="235.3,371.0 233.6,345.8 247.9,335.0 262.3,324.3 280.2,318.9 289.2,313.5 298.2,318.9 312.6,318.9 319.8,311.7 323.4,320.7 330.5,331.5 341.3,342.2 352.1,356.6 353.9,371.0" fill="#131313"/><polygon points="18.0,345.8 21.6,329.7 34.1,317.1 37.7,320.7 30.5,349.4 18.0,353.0" fill="#131313"/><polygon points="129.3,248.8 132.9,250.6 133.8,257.8 130.2,257.8" fill="#131313"/><polygon points="482.6,0.0 482.6,0.7 474.2,7.3 478.1,14.6 493.7,13.4 494.2,21.2 482.6,26.8 478.7,36.8 476.7,46.3 483.5,49.7 499.0,51.4 509.2,46.3 519.5,44.6 529.8,46.3 543.5,44.6 555.5,44.6 564.1,49.7 570.9,56.5 581.2,68.5 588.1,78.8 598.3,96.0 605.2,106.2 608.6,120.0 606.9,137.1 615.5,154.2 627.5,164.5 637.8,174.8 649.6,200.6 665.5,216.4 689.2,224.4 705.1,230.3 720.9,240.2 736.8,250.1 748.7,258.0 752.6,267.9 744.7,275.9 748.7,291.7 760.6,307.6 774.4,331.3 774.4,371.0 854.0,371.0 854.0,0.0" fill="#131313"/><polygon points="447.0,61.0 462.0,56.0 472.0,53.0 470.0,55.0 460.0,59.0 447.0,63.0" fill="#131313"/><polygon points="790.8,0.0 825.1,0.0 828.5,17.1 837.0,30.8 854.0,44.6 854.0,274.0 837.0,267.0 817.0,247.0 792.0,240.0 767.0,243.0 752.0,247.0 737.0,239.0 724.0,235.0 722.0,222.0 724.0,207.0 713.0,214.0 705.0,224.0 693.0,217.0 689.0,205.0 689.0,193.0 705.0,183.0 725.0,179.0 737.0,187.0 742.0,199.0 739.4,185.0 742.8,174.8 749.7,164.5 753.1,154.2 760.0,140.5 770.2,130.2 785.6,126.8 802.8,118.2 825.1,111.4 809.6,96.0 816.5,89.1 811.3,77.1 802.8,65.1 789.1,42.8" fill="#2b2b2b"/><polygon points="698.3,42.8 708.5,27.4 720.5,17.1 729.1,10.3 742.8,17.1 748.0,30.8 751.4,51.4 746.2,72.0 742.8,92.5 736.0,82.2 722.2,65.1 705.1,60.0" fill="#2b2b2b"/><polygon points="773.7,102.8 790.8,99.4 801.0,111.4 789.1,120.0 777.1,116.5" fill="#2b2b2b"/><polygon points="705.1,109.7 718.8,106.2 734.2,116.5 742.8,123.4 737.7,135.4 722.2,133.7 718.8,120.0" fill="#2b2b2b"/><polygon points="752.0,0.0 767.0,0.0 764.0,17.0 774.0,27.0 767.0,29.0 754.0,15.0" fill="#2b2b2b"/><polygon points="27.4,123.4 39.4,113.1 46.3,116.5 41.1,123.4 48.0,142.2 46.3,154.2 34.3,150.8 32.6,133.7" fill="#2b2b2b"/><polygon points="0.0,123.0 10.0,127.0 10.0,140.0 0.0,142.0" fill="#2b2b2b"/><polygon points="0.0,0.0 17.0,0.0 12.0,12.0 0.0,15.0" fill="#2b2b2b"/><polygon points="22.0,177.0 44.0,190.0 55.0,196.0 48.0,197.0 32.0,189.0 20.0,179.0" fill="#2b2b2b"/><polygon points="0.0,197.0 4.0,200.0 18.0,232.0 15.0,236.0 0.0,217.0" fill="#2b2b2b"/><polygon points="201.0,97.0 212.0,85.0 218.0,73.0 220.0,77.0 214.0,89.0 204.0,99.0" fill="#2b2b2b"/><polygon points="728.9,205.5 748.7,208.5 760.6,216.4 748.7,214.4 730.8,208.5" fill="#131313"/><polygon points="763.0,215.5 774.4,216.5 774.0,220.0 764.0,219.5" fill="#131313"/><polyline points="25.7,102.8 29.1,97.7 41.1,91.7 51.4,96.0 68.5,94.2 72.0,89.1 70.3,78.8 94.2,72.0 102.8,78.0 118.2,78.8 130.2,96.0 147.4,101.1 149.1,102.8 142.2,109.7 137.1,116.5 130.2,123.4 130.2,131.9 120.0,135.4 108.0,135.4 102.8,137.1 93.4,140.5 85.7,133.7 75.4,128.5 65.1,120.0 54.8,121.7 54.8,137.1 44.6,135.4 34.3,130.2 27.4,120.0 25.7,102.8" fill="none" stroke="#525252" stroke-width="1"/><polyline points="149.1,102.8 162.8,97.7 171.3,96.0 183.3,99.4 186.8,90.8 197.0,94.2 205.6,99.4 212.0,99.4 222.3,102.8 237.7,99.4 251.4,87.4 261.7,82.2 270.3,85.7 275.4,102.8 285.7,109.7 296.0,108.0 290.8,123.4 284.0,135.4 268.5,142.2" fill="none" stroke="#525252" stroke-width="1"/><polyline points="149.1,102.8 159.4,111.4 162.8,120.0 178.2,132.0 202.2,135.4 212.0,132.0 225.7,123.4 237.7,109.7 251.4,113.1" fill="none" stroke="#525252" stroke-width="1"/><polyline points="54.8,137.1 68.5,154.2 85.7,150.8 96.0,150.8 102.8,157.6 109.7,171.3 120.0,185.0" fill="none" stroke="#525252" stroke-width="1"/><polyline points="0.0,154.2 25.7,149.1 48.0,154.2 68.5,154.2" fill="none" stroke="#525252" stroke-width="1"/><polyline points="18.8,142.2 25.7,162.8 34.3,185.0" fill="none" stroke="#525252" stroke-width="1"/><polyline points="68.5,154.2 72.0,171.3 73.7,185.0 88.0,198.6" fill="none" stroke="#525252" stroke-width="1"/><polyline points="102.8,157.6 116.5,157.6 128.5,162.8 130.2,171.3 142.2,185.0 152.7,209.3" fill="none" stroke="#525252" stroke-width="1"/><polyline points="142.2,185.0 162.0,182.0 177.0,189.0 185.0,202.0 192.0,217.0 203.0,223.0 220.0,232.7" fill="none" stroke="#525252" stroke-width="1"/><polyline points="0.0,213.0 17.0,207.0 37.0,202.0" fill="none" stroke="#525252" stroke-width="1"/><polyline points="0.0,257.0 12.0,255.0 24.0,251.0" fill="none" stroke="#525252" stroke-width="1"/><polyline points="0.0,277.0 10.0,275.0" fill="none" stroke="#525252" stroke-width="1"/><polyline points="555.5,0.0 555.5,44.6" fill="none" stroke="#525252" stroke-width="1"/><polyline points="608.6,104.0 696.5,103.7 717.1,109.7 734.2,120.0 742.8,130.2 760.0,123.4 777.1,113.1 782.2,123.4" fill="none" stroke="#525252" stroke-width="1"/><polyline points="635.8,172.8 661.5,174.8 673.4,180.8 689.2,194.6" fill="none" stroke="#525252" stroke-width="1"/><polyline points="727.0,239.0 734.0,245.0 742.0,247.0" fill="none" stroke="#525252" stroke-width="1"/><polyline points="764.5,242.2 766.5,256.0 778.4,264.0 782.3,275.9 792.3,264.0 800.2,260.0 804.1,252.1" fill="none" stroke="#525252" stroke-width="1"/><polyline points="800.2,260.0 808.1,271.9 820.0,269.9 824.0,260.0 831.9,273.9" fill="none" stroke="#525252" stroke-width="1"/><polyline points="752.6,275.9 768.5,283.8 772.4,275.9 780.4,275.9 808.1,281.8 831.9,279.8 853.7,283.8" fill="none" stroke="#525252" stroke-width="1"/><polyline points="772.4,275.9 772.4,287.7 764.5,295.7 762.5,303.6 778.4,309.5 788.3,307.6 800.2,319.4 808.1,335.3 818.0,355.1 824.0,367.0" fill="none" stroke="#525252" stroke-width="1"/><polyline points="778.4,309.5 778.4,325.4 774.4,331.3 788.3,343.2 796.2,347.2 808.1,335.3" fill="none" stroke="#525252" stroke-width="1"/><polyline points="776.4,351.1 788.3,347.2 800.2,355.1 808.1,371.0" fill="none" stroke="#525252" stroke-width="1"/><text x="202" y="15" font-family="Liberation Sans, sans-serif" font-size="9" fill="#8c8c8c" text-anchor="middle">Russia</text><text x="188" y="163" font-family="Liberation Sans, sans-serif" font-size="9" fill="#8c8c8c" text-anchor="middle">China</text><text x="306" y="161" font-family="Liberation Sans, sans-serif" font-size="9" fill="#8c8c8c" text-anchor="middle">Japan</text><text x="49" y="170" font-family="Liberation Sans, sans-serif" font-size="9" fill="#8c8c8c" text-anchor="middle">Iran</text><text x="123" y="207" font-family="Liberation Sans, sans-serif" font-size="9" fill="#8c8c8c" text-anchor="middle">India</text><text x="233" y="281" font-family="Liberation Sans, sans-serif" font-size="9" fill="#8c8c8c" text-anchor="middle">Indonesia</text><text x="293" y="357" font-family="Liberation Sans, sans-serif" font-size="9" fill="#8c8c8c" text-anchor="middle">Australia</text><text x="649" y="52" font-family="Liberation Sans, sans-serif" font-size="9" fill="#8c8c8c" text-anchor="middle">Canada</text><text x="685" y="140" font-family="Liberation Sans, sans-serif" font-size="9" fill="#8c8c8c" text-anchor="middle">United</text><text x="685" y="149" font-family="Liberation Sans, sans-serif" font-size="9" fill="#8c8c8c" text-anchor="middle">States</text><text x="676" y="207" font-family="Liberation Sans, sans-serif" font-size="9" fill="#8c8c8c" text-anchor="middle">Mexico</text><text x="762" y="268" font-family="Liberation Sans, sans-serif" font-size="9" fill="#8c8c8c" text-anchor="middle">Colombia</text><text x="765" y="318" font-family="Liberation Sans, sans-serif" font-size="9" fill="#8c8c8c" text-anchor="middle">Peru</text><text x="837" y="315" font-family="Liberation Sans, sans-serif" font-size="9" fill="#8c8c8c" text-anchor="middle">Brazil</text><circle cx="55" cy="189" r="8.0" fill="#080808" opacity="0.85"/><circle cx="55" cy="189" r="6.5" fill="#c3d162" stroke="#f0f0f0" stroke-width="0.9" stroke-opacity="0.8"/><circle cx="316" cy="132" r="9.0" fill="#080808" opacity="0.85"/><circle cx="316" cy="132" r="7.5" fill="#ecd06a" stroke="#f0f0f0" stroke-width="0.9" stroke-opacity="0.8"/><circle cx="257" cy="199" r="9.0" fill="#080808" opacity="0.85"/><circle cx="257" cy="199" r="7.5" fill="#d9d06c" stroke="#f0f0f0" stroke-width="0.9" stroke-opacity="0.8"/><circle cx="329" cy="227" r="9.5" fill="#080808" opacity="0.85"/><circle cx="329" cy="227" r="8" fill="#f8b158" stroke="#f0f0f0" stroke-width="0.9" stroke-opacity="0.8"/><circle cx="254" cy="235" r="9.0" fill="#080808" opacity="0.85"/><circle cx="254" cy="235" r="7.5" fill="#e8cf6c" stroke="#f0f0f0" stroke-width="0.9" stroke-opacity="0.8"/><circle cx="172" cy="246" r="9.0" fill="#080808" opacity="0.85"/><circle cx="172" cy="246" r="7.5" fill="#d8d06c" stroke="#f0f0f0" stroke-width="0.9" stroke-opacity="0.8"/><circle cx="174" cy="276" r="8.0" fill="#080808" opacity="0.85"/><circle cx="174" cy="276" r="6.5" fill="#9cc462" stroke="#f0f0f0" stroke-width="0.9" stroke-opacity="0.8"/><circle cx="275" cy="268" r="9.0" fill="#080808" opacity="0.85"/><circle cx="275" cy="268" r="7.5" fill="#f3c58a" stroke="#f0f0f0" stroke-width="0.9" stroke-opacity="0.8"/><circle cx="273" cy="271" r="8.5" fill="#080808" opacity="0.85"/><circle cx="273" cy="271" r="7" fill="#d7d070" stroke="#f0f0f0" stroke-width="0.9" stroke-opacity="0.8"/><circle cx="275" cy="275" r="8.5" fill="#080808" opacity="0.85"/><circle cx="275" cy="275" r="7" fill="#f5c25e" stroke="#f0f0f0" stroke-width="0.9" stroke-opacity="0.8"/><circle cx="265" cy="278" r="9.5" fill="#080808" opacity="0.85"/><circle cx="265" cy="278" r="8" fill="#f79a50" stroke="#f0f0f0" stroke-width="0.9" stroke-opacity="0.8"/><circle cx="212" cy="308" r="8.0" fill="#080808" opacity="0.85"/><circle cx="212" cy="308" r="6.5" fill="#9cc462" stroke="#f0f0f0" stroke-width="0.9" stroke-opacity="0.8"/><circle cx="251" cy="303" r="8.5" fill="#080808" opacity="0.85"/><circle cx="251" cy="303" r="7" fill="#b3cc5e" stroke="#f0f0f0" stroke-width="0.9" stroke-opacity="0.8"/><circle cx="277" cy="298" r="9.0" fill="#080808" opacity="0.85"/><circle cx="277" cy="298" r="7.5" fill="#d6cc62" stroke="#f0f0f0" stroke-width="0.9" stroke-opacity="0.8"/><circle cx="310" cy="292" r="8.0" fill="#080808" opacity="0.85"/><circle cx="310" cy="292" r="6.5" fill="#b3cc5e" stroke="#f0f0f0" stroke-width="0.9" stroke-opacity="0.8"/><circle cx="339" cy="296" r="8.5" fill="#080808" opacity="0.85"/><circle cx="339" cy="296" r="7" fill="#f0d070" stroke="#f0f0f0" stroke-width="0.9" stroke-opacity="0.8"/><circle cx="333" cy="295" r="8.5" fill="#080808" opacity="0.85"/><circle cx="333" cy="295" r="7" fill="#ecd06a" stroke="#f0f0f0" stroke-width="0.9" stroke-opacity="0.8"/><circle cx="396" cy="324" r="11.5" fill="#080808" opacity="0.85"/><circle cx="396" cy="324" r="10" fill="#c8283a" stroke="#f0f0f0" stroke-width="0.9" stroke-opacity="0.8"/><circle cx="404" cy="347" r="8.0" fill="#080808" opacity="0.85"/><circle cx="404" cy="347" r="6.5" fill="#c9cc5e" stroke="#f0f0f0" stroke-width="0.9" stroke-opacity="0.8"/><circle cx="541" cy="22" r="7.5" fill="#080808" opacity="0.85"/><circle cx="541" cy="22" r="6" fill="#b7d06a" stroke="#f0f0f0" stroke-width="0.9" stroke-opacity="0.8"/><circle cx="536" cy="23" r="6.0" fill="#080808" opacity="0.85"/><circle cx="536" cy="23" r="4.5" fill="#55a364" stroke="#f0f0f0" stroke-width="0.9" stroke-opacity="0.8"/><circle cx="522" cy="32" r="4.0" fill="#080808" opacity="0.85"/><circle cx="522" cy="32" r="2.5" fill="#3d9a5a" stroke="#f0f0f0" stroke-width="0.9" stroke-opacity="0.8"/><circle cx="529" cy="36" r="7.5" fill="#080808" opacity="0.85"/><circle cx="529" cy="36" r="6" fill="#a9cc6e" stroke="#f0f0f0" stroke-width="0.9" stroke-opacity="0.8"/><circle cx="527" cy="41" r="8.0" fill="#080808" opacity="0.85"/><circle cx="527" cy="41" r="6.5" fill="#a9cc6e" stroke="#f0f0f0" stroke-width="0.9" stroke-opacity="0.8"/><circle cx="518" cy="48" r="6.0" fill="#080808" opacity="0.85"/><circle cx="518" cy="48" r="4.5" fill="#7dbb70" stroke="#f0f0f0" stroke-width="0.9" stroke-opacity="0.8"/><circle cx="526" cy="53" r="6.0" fill="#080808" opacity="0.85"/><circle cx="526" cy="53" r="4.5" fill="#55a364" stroke="#f0f0f0" stroke-width="0.9" stroke-opacity="0.8"/><circle cx="538" cy="50" r="6.5" fill="#080808" opacity="0.85"/><circle cx="538" cy="50" r="5" fill="#55a364" stroke="#f0f0f0" stroke-width="0.9" stroke-opacity="0.8"/><circle cx="509" cy="57" r="5.0" fill="#080808" opacity="0.85"/><circle cx="509" cy="57" r="3.5" fill="#3d9a5a" stroke="#f0f0f0" stroke-width="0.9" stroke-opacity="0.8"/><circle cx="531" cy="65" r="7.5" fill="#080808" opacity="0.85"/><circle cx="531" cy="65" r="6" fill="#a9d06a" stroke="#f0f0f0" stroke-width="0.9" stroke-opacity="0.8"/><circle cx="512" cy="71" r="6.5" fill="#080808" opacity="0.85"/><circle cx="512" cy="71" r="5" fill="#5aa864" stroke="#f0f0f0" stroke-width="0.9" stroke-opacity="0.8"/><circle cx="486" cy="73" r="6.0" fill="#080808" opacity="0.85"/><circle cx="486" cy="73" r="4.5" fill="#5aa864" stroke="#f0f0f0" stroke-width="0.9" stroke-opacity="0.8"/><circle cx="457" cy="90" r="5.0" fill="#080808" opacity="0.85"/><circle cx="457" cy="90" r="3.5" fill="#3d9a5a" stroke="#f0f0f0" stroke-width="0.9" stroke-opacity="0.8"/><circle cx="439" cy="92" r="4.0" fill="#080808" opacity="0.85"/><circle cx="439" cy="92" r="2.5" fill="#3d9a5a" stroke="#f0f0f0" stroke-width="0.9" stroke-opacity="0.8"/><circle cx="435" cy="100" r="5.0" fill="#080808" opacity="0.85"/><circle cx="435" cy="100" r="3.5" fill="#3d9a5a" stroke="#f0f0f0" stroke-width="0.9" stroke-opacity="0.8"/><circle cx="617" cy="103" r="9.0" fill="#080808" opacity="0.85"/><circle cx="617" cy="103" r="7.5" fill="#f0cf62" stroke="#f0f0f0" stroke-width="0.9" stroke-opacity="0.8"/><circle cx="638" cy="109" r="5.0" fill="#080808" opacity="0.85"/><circle cx="638" cy="109" r="3.5" fill="#4a9f60" stroke="#f0f0f0" stroke-width="0.9" stroke-opacity="0.8"/><circle cx="636" cy="125" r="4.0" fill="#080808" opacity="0.85"/><circle cx="636" cy="125" r="2.5" fill="#4a9f60" stroke="#f0f0f0" stroke-width="0.9" stroke-opacity="0.8"/><circle cx="650" cy="146" r="4.0" fill="#080808" opacity="0.85"/><circle cx="650" cy="146" r="2.5" fill="#4a9f60" stroke="#f0f0f0" stroke-width="0.9" stroke-opacity="0.8"/><circle cx="621" cy="148" r="5.0" fill="#080808" opacity="0.85"/><circle cx="621" cy="148" r="3.5" fill="#4a9f60" stroke="#f0f0f0" stroke-width="0.9" stroke-opacity="0.8"/><circle cx="632" cy="148" r="5.5" fill="#080808" opacity="0.85"/><circle cx="632" cy="148" r="4" fill="#4a9f60" stroke="#f0f0f0" stroke-width="0.9" stroke-opacity="0.8"/><circle cx="617" cy="157" r="4.0" fill="#080808" opacity="0.85"/><circle cx="617" cy="157" r="2.5" fill="#4a9f60" stroke="#f0f0f0" stroke-width="0.9" stroke-opacity="0.8"/><circle cx="632" cy="169" r="6.5" fill="#080808" opacity="0.85"/><circle cx="632" cy="169" r="5" fill="#6fb46a" stroke="#f0f0f0" stroke-width="0.9" stroke-opacity="0.8"/><circle cx="628" cy="166" r="6.0" fill="#080808" opacity="0.85"/><circle cx="628" cy="166" r="4.5" fill="#5aa864" stroke="#f0f0f0" stroke-width="0.9" stroke-opacity="0.8"/><circle cx="667" cy="175" r="8.0" fill="#080808" opacity="0.85"/><circle cx="667" cy="175" r="6.5" fill="#a9cc6e" stroke="#f0f0f0" stroke-width="0.9" stroke-opacity="0.8"/><circle cx="668" cy="175" r="4.0" fill="#080808" opacity="0.85"/><circle cx="668" cy="175" r="2.5" fill="#3d9a5a" stroke="#f0f0f0" stroke-width="0.9" stroke-opacity="0.8"/><circle cx="511" cy="217" r="4.5" fill="#080808" opacity="0.85"/><circle cx="511" cy="217" r="3" fill="#4a9f60" stroke="#f0f0f0" stroke-width="0.9" stroke-opacity="0.8"/><circle cx="778" cy="217" r="6.5" fill="#080808" opacity="0.85"/><circle cx="778" cy="217" r="5" fill="#5aa864" stroke="#f0f0f0" stroke-width="0.9" stroke-opacity="0.8"/><circle cx="785" cy="218" r="6.5" fill="#080808" opacity="0.85"/><circle cx="785" cy="218" r="5" fill="#5aa864" stroke="#f0f0f0" stroke-width="0.9" stroke-opacity="0.8"/><circle cx="796" cy="243" r="10.5" fill="#080808" opacity="0.85"/><circle cx="796" cy="243" r="9" fill="#e9714a" stroke="#f0f0f0" stroke-width="0.9" stroke-opacity="0.8"/><circle cx="742" cy="284" r="11.5" fill="#080808" opacity="0.85"/><circle cx="742" cy="284" r="10" fill="#c8323f" stroke="#f0f0f0" stroke-width="0.9" stroke-opacity="0.8"/><circle cx="787" cy="334" r="9.0" fill="#080808" opacity="0.85"/><circle cx="787" cy="334" r="7.5" fill="#efd070" stroke="#f0f0f0" stroke-width="0.9" stroke-opacity="0.8"/><circle cx="772" cy="345" r="8.0" fill="#080808" opacity="0.85"/><circle cx="772" cy="345" r="6.5" fill="#c9cc5e" stroke="#f0f0f0" stroke-width="0.9" stroke-opacity="0.8"/><circle cx="454" cy="343" r="9.0" fill="#080808" opacity="0.85"/><circle cx="454" cy="343" r="7.5" fill="#f79a50" stroke="#f0f0f0" stroke-width="0.9" stroke-opacity="0.8"/><circle cx="457" cy="329" r="9.0" fill="#080808" opacity="0.85"/><circle cx="457" cy="329" r="7.5" fill="#f8b158" stroke="#f0f0f0" stroke-width="0.9" stroke-opacity="0.8"/><circle cx="443" cy="339" r="8.0" fill="#080808" opacity="0.85"/><circle cx="443" cy="339" r="6.5" fill="#b3cc5e" stroke="#f0f0f0" stroke-width="0.9" stroke-opacity="0.8"/><rect x="2" y="353" width="176" height="17" fill="#1b2233"/><text x="4.5" y="365.5" font-family="Liberation Sans, sans-serif" font-size="11" fill="#ffffff">© 2024 Mapbox © OpenStreetMap</text></svg>
<div class="r" style="left:627px;top:221px;width:856px;height:2px;background:#f4f4f4;"></div>
<div class="r" style="left:627px;top:221px;width:1px;height:373px;background:#e0e0e0;"></div>
<div class="r" style="left:1482px;top:221px;width:1.5px;height:373px;background:#e0e0e0;"></div>
<div class="r" style="left:1042px;top:585px;width:46px;height:10px;background:#8a8a8a;border-radius:3px 3px 0 0;"></div>
<div class="r" style="left:1047px;top:589px;width:36px;height:1px;background:#f0f0f0;"></div>
<div class="r" style="left:1047px;top:592px;width:36px;height:1px;background:#f0f0f0;"></div>
<div class="r" style="left:216px;top:595px;width:1697px;height:2px;background:#6f6f6f;"></div>
<div class="r" style="left:216px;top:595px;width:2px;height:428px;background:#6f6f6f;"></div>
<div class="r" style="left:1911px;top:595px;width:2px;height:428px;background:#6f6f6f;"></div>
<div class="r" style="left:216px;top:1020px;width:1697px;height:2px;background:#6f6f6f;"></div>
<div class="r" style="left:216px;top:595px;width:20px;height:84px;background:#6b6b6b;border-radius:0 0 2px 0;"></div>
<svg class="r" style="left:220px;top:600px;" width="11" height="11" viewBox="0 0 11 11"><path d="M1 1 L10 10 M10 1 L1 10" stroke="#fff" stroke-width="1.5"/></svg>
<svg class="r" style="left:219px;top:619px;" width="13" height="13" viewBox="0 0 13 13"><path d="M5 2.5 H1 V12 H10.5 V8" fill="none" stroke="#fff" stroke-width="1.2"/><path d="M5 8 L11 2 M7.5 1.5 H11.5 V5.5" fill="none" stroke="#fff" stroke-width="1.3"/></svg>
<svg class="r" style="left:219px;top:641px;" width="14" height="14" viewBox="0 0 14 14"><path d="M1 1 H13 L8.5 6.5 V13 H5.5 V6.5 Z" fill="none" stroke="#fff" stroke-width="1.1"/></svg>
<svg class="r" style="left:221.5px;top:665px;" width="9" height="6" viewBox="0 0 9 6"><path d="M0 0 H8.5 L4.25 5Z" fill="#fff"/></svg>
<div class="t" style="top:610.92px;font-size:19px;color:#dcdcdc;letter-spacing:0.87px;left:713.00px;">Location analysis: Frequency | Average Magnitude | Maximum Magnitude</div>
<div class="t" style="top:650.34px;font-size:12px;color:#f0f0f0;letter-spacing:0.31px;left:298.50px;-webkit-text-stroke:0.45px currentColor;">Location</div>
<svg class="r" style="left:351px;top:648px;" width="13" height="13" viewBox="0 0 13 13"><rect x="0.6" y="0.6" width="11" height="3.4" rx="1.7" fill="#555" stroke="#f4f4f4" stroke-width="1.1"/><rect x="0.6" y="4.6" width="7.4" height="3.2" rx="1.6" fill="#555" stroke="#f4f4f4" stroke-width="1.1"/><rect x="0.6" y="8.6" width="4.4" height="3.2" rx="1.6" fill="#555" stroke="#f4f4f4" stroke-width="1.1"/></svg>
<div class="r" style="left:236px;top:664px;width:147px;height:1px;background:#bdbdbd;"></div>
<div class="r" style="left:222px;top:960px;width:161px;height:1px;background:#d0d0d0;"></div>
<div class="t" style="top:669.14px;font-size:12px;color:#e4e4e4;letter-spacing:0.3px;right:1543.00px;">Alaska</div>
<div class="r" style="left:382px;top:667px;width:451.8px;height:15px;background:#f28e2e;"></div>
<div class="t" style="top:669.14px;font-size:12px;color:#e0e0e0;letter-spacing:0.2px;left:838.30px;">18</div>
<div class="r" style="left:884px;top:667px;width:106.6px;height:15px;background:#f28e2e;"></div>
<div class="t" style="top:669.14px;font-size:12px;color:#e0e0e0;letter-spacing:0.2px;left:995.15px;">18</div>
<div class="r" style="left:1386.2px;top:667px;width:178.8px;height:15px;background:#f28e2e;"></div>
<div class="t" style="top:669.14px;font-size:12px;color:#e0e0e0;letter-spacing:0.2px;left:1569.52px;">32</div>
<div class="t" style="top:689.14px;font-size:12px;color:#e4e4e4;letter-spacing:0.3px;right:1543.00px;">Puerto Rico</div>
<div class="r" style="left:382px;top:687px;width:301.2px;height:15px;background:#f28e2e;"></div>
<div class="t" style="top:689.14px;font-size:12px;color:#e0e0e0;letter-spacing:0.2px;left:687.70px;">12</div>
<div class="r" style="left:884px;top:687px;width:71.1px;height:15px;background:#f28e2e;"></div>
<div class="t" style="top:689.14px;font-size:12px;color:#e0e0e0;letter-spacing:0.2px;left:959.60px;">12</div>
<div class="r" style="left:1386.2px;top:687px;width:111.8px;height:15px;background:#f28e2e;"></div>
<div class="t" style="top:689.14px;font-size:12px;color:#e0e0e0;letter-spacing:0.2px;left:1502.46px;">20</div>
<div class="t" style="top:709.14px;font-size:12px;color:#e4e4e4;letter-spacing:0.3px;right:1543.00px;">Indonesia</div>
<div class="r" style="left:382px;top:707px;width:301.2px;height:15px;background:#f28e2e;"></div>
<div class="t" style="top:709.14px;font-size:12px;color:#e0e0e0;letter-spacing:0.2px;left:687.70px;">12</div>
<div class="r" style="left:884px;top:707px;width:242.9px;height:15px;background:#f28e2e;"></div>
<div class="t" style="top:709.14px;font-size:12px;color:#e0e0e0;letter-spacing:0.2px;left:1131.42px;">41</div>
<div class="r" style="left:1386.2px;top:707px;width:307.3px;height:15px;background:#f28e2e;"></div>
<div class="t" style="top:709.14px;font-size:12px;color:#e0e0e0;letter-spacing:0.2px;left:1698.04px;">55</div>
<div class="t" style="top:729.14px;font-size:12px;color:#e4e4e4;letter-spacing:0.3px;right:1543.00px;">California</div>
<div class="r" style="left:382px;top:727px;width:251.0px;height:15px;background:#f28e2e;"></div>
<div class="t" style="top:729.14px;font-size:12px;color:#e0e0e0;letter-spacing:0.2px;left:637.50px;">10</div>
<div class="r" style="left:884px;top:727px;width:65.2px;height:15px;background:#f28e2e;"></div>
<div class="t" style="top:729.14px;font-size:12px;color:#e0e0e0;letter-spacing:0.2px;left:953.67px;">11</div>
<div class="r" style="left:1386.2px;top:727px;width:134.1px;height:15px;background:#f28e2e;"></div>
<div class="t" style="top:729.14px;font-size:12px;color:#e0e0e0;letter-spacing:0.2px;left:1524.81px;">24</div>
<div class="t" style="top:749.14px;font-size:12px;color:#e4e4e4;letter-spacing:0.3px;right:1543.00px;">Hawaii</div>
<div class="r" style="left:382px;top:747px;width:175.7px;height:15px;background:#f28e2e;"></div>
<div class="t" style="top:749.14px;font-size:12px;color:#e0e0e0;letter-spacing:0.2px;left:562.20px;">7</div>
<div class="r" style="left:884px;top:747px;width:41.5px;height:15px;background:#f28e2e;"></div>
<div class="t" style="top:749.14px;font-size:12px;color:#e0e0e0;letter-spacing:0.2px;left:929.98px;">7</div>
<div class="r" style="left:1386.2px;top:747px;width:44.7px;height:15px;background:#f28e2e;"></div>
<div class="t" style="top:749.14px;font-size:12px;color:#e0e0e0;letter-spacing:0.2px;left:1435.40px;">8</div>
<div class="t" style="top:769.14px;font-size:12px;color:#e4e4e4;letter-spacing:0.3px;right:1543.00px;">Nevada</div>
<div class="r" style="left:382px;top:767px;width:100.4px;height:15px;background:#f28e2e;"></div>
<div class="t" style="top:769.14px;font-size:12px;color:#e0e0e0;letter-spacing:0.2px;left:486.90px;">4</div>
<div class="r" style="left:884px;top:767px;width:71.1px;height:15px;background:#f28e2e;"></div>
<div class="t" style="top:769.14px;font-size:12px;color:#e0e0e0;letter-spacing:0.2px;left:959.60px;">12</div>
<div class="r" style="left:1386.2px;top:767px;width:89.4px;height:15px;background:#f28e2e;"></div>
<div class="t" style="top:769.14px;font-size:12px;color:#e0e0e0;letter-spacing:0.2px;left:1480.11px;">16</div>
<div class="t" style="top:789.14px;font-size:12px;color:#e4e4e4;letter-spacing:0.3px;right:1543.00px;">Vanuatu</div>
<div class="r" style="left:382px;top:787px;width:75.3px;height:15px;background:#f28e2e;"></div>
<div class="t" style="top:789.14px;font-size:12px;color:#e0e0e0;letter-spacing:0.2px;left:461.80px;">3</div>
<div class="r" style="left:884px;top:787px;width:373.3px;height:15px;background:#f28e2e;"></div>
<div class="t" style="top:789.14px;font-size:12px;color:#e0e0e0;letter-spacing:0.2px;left:1261.78px;">63</div>
<div class="r" style="left:1386.2px;top:787px;width:452.6px;height:15px;background:#f28e2e;"></div>
<div class="t" style="top:789.14px;font-size:12px;color:#e0e0e0;letter-spacing:0.2px;left:1843.33px;">81</div>
<div class="t" style="top:809.14px;font-size:12px;color:#e4e4e4;letter-spacing:0.3px;right:1543.00px;">Tonga</div>
<div class="r" style="left:382px;top:807px;width:75.3px;height:15px;background:#f28e2e;"></div>
<div class="t" style="top:809.14px;font-size:12px;color:#e0e0e0;letter-spacing:0.2px;left:461.80px;">3</div>
<div class="r" style="left:884px;top:807px;width:266.6px;height:15px;background:#f28e2e;"></div>
<div class="t" style="top:809.14px;font-size:12px;color:#e0e0e0;letter-spacing:0.2px;left:1155.12px;">45</div>
<div class="r" style="left:1386.2px;top:807px;width:296.2px;height:15px;background:#f28e2e;"></div>
<div class="t" style="top:809.14px;font-size:12px;color:#e0e0e0;letter-spacing:0.2px;left:1686.86px;">53</div>
<div class="t" style="top:829.14px;font-size:12px;color:#e4e4e4;letter-spacing:0.3px;right:1543.00px;">Utah</div>
<div class="r" style="left:382px;top:827px;width:50.2px;height:15px;background:#f28e2e;"></div>
<div class="t" style="top:829.14px;font-size:12px;color:#e0e0e0;letter-spacing:0.2px;left:436.70px;">2</div>
<div class="r" style="left:884px;top:827px;width:35.5px;height:15px;background:#f28e2e;"></div>
<div class="t" style="top:829.14px;font-size:12px;color:#e0e0e0;letter-spacing:0.2px;left:924.05px;">6</div>
<div class="r" style="left:1386.2px;top:827px;width:33.5px;height:15px;background:#f28e2e;"></div>
<div class="t" style="top:829.14px;font-size:12px;color:#e0e0e0;letter-spacing:0.2px;left:1424.23px;">6</div>
<div class="t" style="top:849.14px;font-size:12px;color:#e4e4e4;letter-spacing:0.3px;right:1543.00px;">Taiwan</div>
<div class="r" style="left:382px;top:847px;width:50.2px;height:15px;background:#f28e2e;"></div>
<div class="t" style="top:849.14px;font-size:12px;color:#e0e0e0;letter-spacing:0.2px;left:436.70px;">2</div>
<div class="r" style="left:884px;top:847px;width:225.2px;height:15px;background:#f28e2e;"></div>
<div class="t" style="top:849.14px;font-size:12px;color:#e0e0e0;letter-spacing:0.2px;left:1113.65px;">38</div>
<div class="r" style="left:1386.2px;top:847px;width:223.5px;height:15px;background:#f28e2e;"></div>
<div class="t" style="top:849.14px;font-size:12px;color:#e0e0e0;letter-spacing:0.2px;left:1614.22px;">40</div>
<div class="t" style="top:869.14px;font-size:12px;color:#e4e4e4;letter-spacing:0.3px;right:1543.00px;">Papua New Guinea</div>
<div class="r" style="left:382px;top:867px;width:50.2px;height:15px;background:#f28e2e;"></div>
<div class="t" style="top:869.14px;font-size:12px;color:#e0e0e0;letter-spacing:0.2px;left:436.70px;">2</div>
<div class="r" style="left:884px;top:867px;width:248.8px;height:15px;background:#f28e2e;"></div>
<div class="t" style="top:869.14px;font-size:12px;color:#e0e0e0;letter-spacing:0.2px;left:1137.35px;">42</div>
<div class="r" style="left:1386.2px;top:867px;width:234.7px;height:15px;background:#f28e2e;"></div>
<div class="t" style="top:869.14px;font-size:12px;color:#e0e0e0;letter-spacing:0.2px;left:1625.40px;">42</div>
<div class="t" style="top:889.14px;font-size:12px;color:#e4e4e4;letter-spacing:0.3px;right:1543.00px;">New Mexico</div>
<div class="r" style="left:382px;top:887px;width:50.2px;height:15px;background:#f28e2e;"></div>
<div class="t" style="top:889.14px;font-size:12px;color:#e0e0e0;letter-spacing:0.2px;left:436.70px;">2</div>
<div class="r" style="left:884px;top:887px;width:112.6px;height:15px;background:#f28e2e;"></div>
<div class="t" style="top:889.14px;font-size:12px;color:#e0e0e0;letter-spacing:0.2px;left:1001.08px;">19</div>
<div class="r" style="left:1386.2px;top:887px;width:178.8px;height:15px;background:#f28e2e;"></div>
<div class="t" style="top:889.14px;font-size:12px;color:#e0e0e0;letter-spacing:0.2px;left:1569.52px;">32</div>
<div class="t" style="top:909.14px;font-size:12px;color:#e4e4e4;letter-spacing:0.3px;right:1543.00px;">Venezuela</div>
<div class="r" style="left:382px;top:907px;width:25.1px;height:15px;background:#f28e2e;"></div>
<div class="t" style="top:909.14px;font-size:12px;color:#e0e0e0;letter-spacing:0.2px;left:411.60px;">1</div>
<div class="r" style="left:884px;top:907px;width:379.2px;height:15px;background:#f28e2e;"></div>
<div class="t" style="top:909.14px;font-size:12px;color:#e0e0e0;letter-spacing:0.2px;left:1267.70px;">64</div>
<div class="r" style="left:1386.2px;top:907px;width:357.6px;height:15px;background:#f28e2e;"></div>
<div class="t" style="top:909.14px;font-size:12px;color:#e0e0e0;letter-spacing:0.2px;left:1748.33px;">64</div>
<div class="t" style="top:929.14px;font-size:12px;color:#e4e4e4;letter-spacing:0.3px;right:1543.00px;">Timor Leste</div>
<div class="r" style="left:382px;top:927px;width:25.1px;height:15px;background:#f28e2e;"></div>
<div class="t" style="top:929.14px;font-size:12px;color:#e0e0e0;letter-spacing:0.2px;left:411.60px;">1</div>
<div class="r" style="left:884px;top:927px;width:237.0px;height:15px;background:#f28e2e;"></div>
<div class="t" style="top:929.14px;font-size:12px;color:#e0e0e0;letter-spacing:0.2px;left:1125.50px;">40</div>
<div class="r" style="left:1386.2px;top:927px;width:223.5px;height:15px;background:#f28e2e;"></div>
<div class="t" style="top:929.14px;font-size:12px;color:#e0e0e0;letter-spacing:0.2px;left:1614.22px;">40</div>
<div class="t" style="top:949.14px;font-size:12px;color:#e4e4e4;letter-spacing:0.3px;right:1543.00px;">Texas</div>
<div class="r" style="left:382px;top:947px;width:25.1px;height:14px;background:#f28e2e;"></div>
<div class="t" style="top:949.14px;font-size:12px;color:#e0e0e0;letter-spacing:0.2px;left:411.60px;">1</div>
<div class="r" style="left:884px;top:947px;width:47.4px;height:14px;background:#f28e2e;"></div>
<div class="t" style="top:949.14px;font-size:12px;color:#e0e0e0;letter-spacing:0.2px;left:935.90px;">8</div>
<div class="r" style="left:1386.2px;top:947px;width:44.7px;height:14px;background:#f28e2e;"></div>
<div class="t" style="top:949.14px;font-size:12px;color:#e0e0e0;letter-spacing:0.2px;left:1435.40px;">8</div>
<div class="r" style="left:382px;top:663px;width:1px;height:3px;background:#e8e8e8;"></div>
<div class="r" style="left:382px;top:683px;width:1px;height:3px;background:#e8e8e8;"></div>
<div class="r" style="left:382px;top:703px;width:1px;height:3px;background:#e8e8e8;"></div>
<div class="r" style="left:382px;top:723px;width:1px;height:3px;background:#e8e8e8;"></div>
<div class="r" style="left:382px;top:743px;width:1px;height:3px;background:#e8e8e8;"></div>
<div class="r" style="left:382px;top:763px;width:1px;height:3px;background:#e8e8e8;"></div>
<div class="r" style="left:382px;top:783px;width:1px;height:3px;background:#e8e8e8;"></div>
<div class="r" style="left:382px;top:803px;width:1px;height:3px;background:#e8e8e8;"></div>
<div class="r" style="left:382px;top:823px;width:1px;height:3px;background:#e8e8e8;"></div>
<div class="r" style="left:382px;top:843px;width:1px;height:3px;background:#e8e8e8;"></div>
<div class="r" style="left:382px;top:863px;width:1px;height:3px;background:#e8e8e8;"></div>
<div class="r" style="left:382px;top:883px;width:1px;height:3px;background:#e8e8e8;"></div>
<div class="r" style="left:382px;top:903px;width:1px;height:3px;background:#e8e8e8;"></div>
<div class="r" style="left:382px;top:923px;width:1px;height:3px;background:#e8e8e8;"></div>
<div class="r" style="left:382px;top:943px;width:1px;height:3px;background:#e8e8e8;"></div>
<div class="r" style="left:884px;top:663px;width:1px;height:3px;background:#e8e8e8;"></div>
<div class="r" style="left:884px;top:683px;width:1px;height:3px;background:#e8e8e8;"></div>
<div class="r" style="left:884px;top:703px;width:1px;height:3px;background:#e8e8e8;"></div>
<div class="r" style="left:884px;top:723px;width:1px;height:3px;background:#e8e8e8;"></div>
<div class="r" style="left:884px;top:743px;width:1px;height:3px;background:#e8e8e8;"></div>
<div class="r" style="left:884px;top:763px;width:1px;height:3px;background:#e8e8e8;"></div>
<div class="r" style="left:884px;top:783px;width:1px;height:3px;background:#e8e8e8;"></div>
<div class="r" style="left:884px;top:803px;width:1px;height:3px;background:#e8e8e8;"></div>
<div class="r" style="left:884px;top:823px;width:1px;height:3px;background:#e8e8e8;"></div>
<div class="r" style="left:884px;top:843px;width:1px;height:3px;background:#e8e8e8;"></div>
<div class="r" style="left:884px;top:863px;width:1px;height:3px;background:#e8e8e8;"></div>
<div class="r" style="left:884px;top:883px;width:1px;height:3px;background:#e8e8e8;"></div>
<div class="r" style="left:884px;top:903px;width:1px;height:3px;background:#e8e8e8;"></div>
<div class="r" style="left:884px;top:923px;width:1px;height:3px;background:#e8e8e8;"></div>
<div class="r" style="left:884px;top:943px;width:1px;height:3px;background:#e8e8e8;"></div>
<div class="r" style="left:1386.2px;top:663px;width:1px;height:3px;background:#e8e8e8;"></div>
<div class="r" style="left:1386.2px;top:683px;width:1px;height:3px;background:#e8e8e8;"></div>
<div class="r" style="left:1386.2px;top:703px;width:1px;height:3px;background:#e8e8e8;"></div>
<div class="r" style="left:1386.2px;top:723px;width:1px;height:3px;background:#e8e8e8;"></div>
<div class="r" style="left:1386.2px;top:743px;width:1px;height:3px;background:#e8e8e8;"></div>
<div class="r" style="left:1386.2px;top:763px;width:1px;height:3px;background:#e8e8e8;"></div>
<div class="r" style="left:1386.2px;top:783px;width:1px;height:3px;background:#e8e8e8;"></div>
<div class="r" style="left:1386.2px;top:803px;width:1px;height:3px;background:#e8e8e8;"></div>
<div class="r" style="left:1386.2px;top:823px;width:1px;height:3px;background:#e8e8e8;"></div>
<div class="r" style="left:1386.2px;top:843px;width:1px;height:3px;background:#e8e8e8;"></div>
<div class="r" style="left:1386.2px;top:863px;width:1px;height:3px;background:#e8e8e8;"></div>
<div class="r" style="left:1386.2px;top:883px;width:1px;height:3px;background:#e8e8e8;"></div>
<div class="r" style="left:1386.2px;top:903px;width:1px;height:3px;background:#e8e8e8;"></div>
<div class="r" style="left:1386.2px;top:923px;width:1px;height:3px;background:#e8e8e8;"></div>
<div class="r" style="left:1386.2px;top:943px;width:1px;height:3px;background:#e8e8e8;"></div>
<div class="r" style="left:382px;top:960px;width:1px;height:1px;background:#ddd;"></div>
<div class="r" style="left:382.0px;top:961px;width:1px;height:4px;background:#e8e8e8;"></div>
<div class="t" style="top:970.14px;font-size:12px;color:#e4e4e4;left:383.50px;">0</div>
<div class="r" style="left:432.2px;top:961px;width:1px;height:4px;background:#e8e8e8;"></div>
<div class="t" style="top:970.14px;font-size:12px;color:#e4e4e4;left:432.70px;transform:translateX(-50%);">2</div>
<div class="r" style="left:482.4px;top:961px;width:1px;height:4px;background:#e8e8e8;"></div>
<div class="t" style="top:970.14px;font-size:12px;color:#e4e4e4;left:482.90px;transform:translateX(-50%);">4</div>
<div class="r" style="left:532.6px;top:961px;width:1px;height:4px;background:#e8e8e8;"></div>
<div class="t" style="top:970.14px;font-size:12px;color:#e4e4e4;left:533.10px;transform:translateX(-50%);">6</div>
<div class="r" style="left:582.8px;top:961px;width:1px;height:4px;background:#e8e8e8;"></div>
<div class="t" style="top:970.14px;font-size:12px;color:#e4e4e4;left:583.30px;transform:translateX(-50%);">8</div>
<div class="r" style="left:633.0px;top:961px;width:1px;height:4px;background:#e8e8e8;"></div>
<div class="t" style="top:970.14px;font-size:12px;color:#e4e4e4;left:633.50px;transform:translateX(-50%);">10</div>
<div class="r" style="left:683.2px;top:961px;width:1px;height:4px;background:#e8e8e8;"></div>
<div class="t" style="top:970.14px;font-size:12px;color:#e4e4e4;left:683.70px;transform:translateX(-50%);">12</div>
<div class="r" style="left:733.4px;top:961px;width:1px;height:4px;background:#e8e8e8;"></div>
<div class="t" style="top:970.14px;font-size:12px;color:#e4e4e4;left:733.90px;transform:translateX(-50%);">14</div>
<div class="r" style="left:783.6px;top:961px;width:1px;height:4px;background:#e8e8e8;"></div>
<div class="t" style="top:970.14px;font-size:12px;color:#e4e4e4;left:784.10px;transform:translateX(-50%);">16</div>
<div class="r" style="left:833.8px;top:961px;width:1px;height:4px;background:#e8e8e8;"></div>
<div class="t" style="top:970.14px;font-size:12px;color:#e4e4e4;left:834.30px;transform:translateX(-50%);">18</div>
<div class="r" style="left:884.0px;top:961px;width:1px;height:4px;background:#e8e8e8;"></div>
<div class="t" style="top:970.14px;font-size:12px;color:#e4e4e4;right:1038.30px;">20</div>
<div class="r" style="left:884px;top:960px;width:1px;height:1px;background:#ddd;"></div>
<div class="r" style="left:884.0px;top:961px;width:1px;height:4px;background:#e8e8e8;"></div>
<div class="t" style="top:970.14px;font-size:12px;color:#e4e4e4;left:885.50px;">0</div>
<div class="r" style="left:943.2px;top:961px;width:1px;height:4px;background:#e8e8e8;"></div>
<div class="t" style="top:970.14px;font-size:12px;color:#e4e4e4;left:943.75px;transform:translateX(-50%);">10</div>
<div class="r" style="left:1002.5px;top:961px;width:1px;height:4px;background:#e8e8e8;"></div>
<div class="t" style="top:970.14px;font-size:12px;color:#e4e4e4;left:1003.00px;transform:translateX(-50%);">20</div>
<div class="r" style="left:1061.8px;top:961px;width:1px;height:4px;background:#e8e8e8;"></div>
<div class="t" style="top:970.14px;font-size:12px;color:#e4e4e4;left:1062.25px;transform:translateX(-50%);">30</div>
<div class="r" style="left:1121.0px;top:961px;width:1px;height:4px;background:#e8e8e8;"></div>
<div class="t" style="top:970.14px;font-size:12px;color:#e4e4e4;left:1121.50px;transform:translateX(-50%);">40</div>
<div class="r" style="left:1180.2px;top:961px;width:1px;height:4px;background:#e8e8e8;"></div>
<div class="t" style="top:970.14px;font-size:12px;color:#e4e4e4;left:1180.75px;transform:translateX(-50%);">50</div>
<div class="r" style="left:1239.5px;top:961px;width:1px;height:4px;background:#e8e8e8;"></div>
<div class="t" style="top:970.14px;font-size:12px;color:#e4e4e4;left:1240.00px;transform:translateX(-50%);">60</div>
<div class="r" style="left:1298.8px;top:961px;width:1px;height:4px;background:#e8e8e8;"></div>
<div class="t" style="top:970.14px;font-size:12px;color:#e4e4e4;left:1299.25px;transform:translateX(-50%);">70</div>
<div class="r" style="left:1358.0px;top:961px;width:1px;height:4px;background:#e8e8e8;"></div>
<div class="t" style="top:970.14px;font-size:12px;color:#e4e4e4;left:1358.50px;transform:translateX(-50%);">80</div>
<div class="r" style="left:1386.2px;top:960px;width:1px;height:1px;background:#ddd;"></div>
<div class="r" style="left:1386.2px;top:961px;width:1px;height:4px;background:#e8e8e8;"></div>
<div class="t" style="top:970.14px;font-size:12px;color:#e4e4e4;left:1387.70px;">0</div>
<div class="r" style="left:1442.1px;top:961px;width:1px;height:4px;background:#e8e8e8;"></div>
<div class="t" style="top:970.14px;font-size:12px;color:#e4e4e4;left:1442.58px;transform:translateX(-50%);">10</div>
<div class="r" style="left:1498.0px;top:961px;width:1px;height:4px;background:#e8e8e8;"></div>
<div class="t" style="top:970.14px;font-size:12px;color:#e4e4e4;left:1498.46px;transform:translateX(-50%);">20</div>
<div class="r" style="left:1553.8px;top:961px;width:1px;height:4px;background:#e8e8e8;"></div>
<div class="t" style="top:970.14px;font-size:12px;color:#e4e4e4;left:1554.34px;transform:translateX(-50%);">30</div>
<div class="r" style="left:1609.7px;top:961px;width:1px;height:4px;background:#e8e8e8;"></div>
<div class="t" style="top:970.14px;font-size:12px;color:#e4e4e4;left:1610.22px;transform:translateX(-50%);">40</div>
<div class="r" style="left:1665.6px;top:961px;width:1px;height:4px;background:#e8e8e8;"></div>
<div class="t" style="top:970.14px;font-size:12px;color:#e4e4e4;left:1666.10px;transform:translateX(-50%);">50</div>
<div class="r" style="left:1721.5px;top:961px;width:1px;height:4px;background:#e8e8e8;"></div>
<div class="t" style="top:970.14px;font-size:12px;color:#e4e4e4;left:1721.98px;transform:translateX(-50%);">60</div>
<div class="r" style="left:1777.4px;top:961px;width:1px;height:4px;background:#e8e8e8;"></div>
<div class="t" style="top:970.14px;font-size:12px;color:#e4e4e4;left:1777.86px;transform:translateX(-50%);">70</div>
<div class="r" style="left:1833.2px;top:961px;width:1px;height:4px;background:#e8e8e8;"></div>
<div class="t" style="top:970.14px;font-size:12px;color:#e4e4e4;left:1833.74px;transform:translateX(-50%);">80</div>
<div class="r" style="left:1889.1px;top:961px;width:1px;height:4px;background:#e8e8e8;"></div>
<div class="t" style="top:970.14px;font-size:12px;color:#e4e4e4;right:33.18px;">90</div>
<div class="t" style="top:994.34px;font-size:12px;color:#ececec;letter-spacing:0.29px;left:551.00px;-webkit-text-stroke:0.45px currentColor;">Count of Earthquake Counter</div>
<svg class="r" style="left:721px;top:992px;" width="13" height="13" viewBox="0 0 13 13"><rect x="0.6" y="0.6" width="11" height="3.4" rx="1.7" fill="#555" stroke="#f4f4f4" stroke-width="1.1"/><rect x="0.6" y="4.6" width="7.4" height="3.2" rx="1.6" fill="#555" stroke="#f4f4f4" stroke-width="1.1"/><rect x="0.6" y="8.6" width="4.4" height="3.2" rx="1.6" fill="#555" stroke="#f4f4f4" stroke-width="1.1"/></svg>
<div class="t" style="top:994.34px;font-size:12px;color:#ececec;letter-spacing:0.39px;left:1134.50px;transform:translateX(-50%);-webkit-text-stroke:0.45px currentColor;">Avg. Magnitude</div>
<div class="t" style="top:994.34px;font-size:12px;color:#ececec;letter-spacing:0.43px;left:1637.00px;transform:translateX(-50%);-webkit-text-stroke:0.45px currentColor;">Max. Magnitude</div>
<div class="r" style="left:1889px;top:664px;width:17px;height:297px;background:#f0f0f0;"></div>
<div class="r" style="left:1890px;top:681px;width:15px;height:153px;background:#c9c9c9;"></div>
<svg class="r" style="left:1893px;top:668px;" width="10" height="7" viewBox="0 0 10 7"><path d="M1 6 L5 2 L9 6" fill="none" stroke="#555" stroke-width="1.6"/></svg>
<svg class="r" style="left:1893px;top:948px;" width="10" height="7" viewBox="0 0 10 7"><path d="M1 1 L5 5 L9 1" fill="none" stroke="#555" stroke-width="1.6"/></svg>
<div class="r" style="left:96px;top:232px;width:159px;height:181px;background:#ffffff;border:1px solid #7a7a7a;box-sizing:border-box;box-shadow:1px 1px 2px rgba(0,0,0,0.25);"></div>
<div class="r" style="left:104px;top:240px;width:142px;height:21px;background:#fff;border:1px solid #7a7a7a;box-sizing:border-box;"></div>
<div class="t" style="top:245.84px;font-size:12px;color:#333;letter-spacing:0.15px;left:109.00px;">Tableau Book</div>
<svg class="r" style="left:232px;top:248px;" width="11" height="7" viewBox="0 0 11 7"><path d="M1 1 L5.5 6 L10 1" fill="none" stroke="#555" stroke-width="1.2"/></svg>
<div class="r" style="left:104px;top:268px;width:52px;height:21px;background:#fff;border:1px solid #7a7a7a;box-sizing:border-box;"></div>
<div class="t" style="top:273.84px;font-size:12px;color:#333;left:109.00px;">9</div>
<svg class="r" style="left:142px;top:276px;" width="10" height="6.5" viewBox="0 0 10 6.5"><path d="M1 1 L5.0 5.5 L9 1" fill="none" stroke="#555" stroke-width="1.2"/></svg>
<div class="r" style="left:160px;top:267px;width:26px;height:23px;background:#dcdcdc;border:1px solid #bdbdbd;box-sizing:border-box;"></div>
<div class="t" style="top:273.84px;font-size:12px;color:#2a3a52;left:173.00px;transform:translateX(-50%);font-weight:700;">B</div>
<div class="r" style="left:190px;top:267px;width:26px;height:23px;background:#dcdcdc;border:1px solid #bdbdbd;box-sizing:border-box;"></div>
<div class="t" style="top:273.84px;font-size:12px;color:#2a3a52;left:203.00px;transform:translateX(-50%);font-style:italic;font-weight:700;font-family:"Liberation Serif",serif;">I</div>
<div class="r" style="left:220px;top:267px;width:26px;height:23px;background:#dcdcdc;border:1px solid #bdbdbd;box-sizing:border-box;"></div>
<div class="t" style="top:273.84px;font-size:12px;color:#2a3a52;left:233.00px;transform:translateX(-50%);font-weight:700;text-decoration:underline;">U</div>
<div class="r" style="left:104px;top:294px;width:13px;padding:1px;background:#d9d9d9;"><div style="height:12.5px;background:#000000"></div></div>
<div class="r" style="left:122px;top:294px;width:14px;height:14px;background:#fff;border:1.5px solid #333;box-sizing:border-box;"></div>
<div class="r" style="left:104px;top:313px;width:13px;padding:1px;background:#d9d9d9;"><div style="height:13.6px;background:#1c1c1c"></div><div style="height:13.6px;background:#333333"></div><div style="height:13.6px;background:#515151"></div><div style="height:13.6px;background:#6a6a6a"></div><div style="height:13.6px;background:#888888"></div></div>
<div class="r" style="left:122px;top:313px;width:13px;padding:1px;background:#d9d9d9;"><div style="height:13.6px;background:#f2f2f2"></div><div style="height:13.6px;background:#e5e5e5"></div><div style="height:13.6px;background:#d3d3d3"></div><div style="height:13.6px;background:#bebebe"></div><div style="height:13.6px;background:#b0b0b0"></div></div>
<div class="r" style="left:142px;top:294px;width:13px;padding:1px;background:#d9d9d9;"><div style="height:13.4px;background:#f28e2b"></div><div style="height:13.4px;background:#f5a34f"></div><div style="height:13.4px;background:#ffbe7d"></div></div>
<div class="r" style="left:142px;top:341px;width:13px;padding:1px;background:#d9d9d9;"><div style="height:13.4px;background:#b07aa1"></div><div style="height:13.4px;background:#c38db5"></div><div style="height:13.4px;background:#d4a6c8"></div></div>
<div class="r" style="left:160px;top:294px;width:13px;padding:1px;background:#d9d9d9;"><div style="height:13.4px;background:#b6992d"></div><div style="height:13.4px;background:#d1b04a"></div><div style="height:13.4px;background:#f1ce63"></div></div>
<div class="r" style="left:160px;top:341px;width:13px;padding:1px;background:#d9d9d9;"><div style="height:13.4px;background:#d37295"></div><div style="height:13.4px;background:#e699b4"></div><div style="height:13.4px;background:#fabfd2"></div></div>
<div class="r" style="left:178px;top:294px;width:13px;padding:1px;background:#d9d9d9;"><div style="height:13.4px;background:#59a14f"></div><div style="height:13.4px;background:#6ab560"></div><div style="height:13.4px;background:#8cd17d"></div></div>
<div class="r" style="left:178px;top:341px;width:13px;padding:1px;background:#d9d9d9;"><div style="height:13.4px;background:#e15759"></div><div style="height:13.4px;background:#f07a78"></div><div style="height:13.4px;background:#ff9d9a"></div></div>
<div class="r" style="left:196px;top:294px;width:13px;padding:1px;background:#d9d9d9;"><div style="height:13.4px;background:#499894"></div><div style="height:13.4px;background:#69a7a1"></div><div style="height:13.4px;background:#86bcb6"></div></div>
<div class="r" style="left:196px;top:341px;width:13px;padding:1px;background:#d9d9d9;"><div style="height:13.4px;background:#9d7660"></div><div style="height:13.4px;background:#b89484"></div><div style="height:13.4px;background:#d7b5a6"></div></div>
<div class="r" style="left:214px;top:294px;width:13px;padding:1px;background:#d9d9d9;"><div style="height:13.4px;background:#4e79a7"></div><div style="height:13.4px;background:#76a0c8"></div><div style="height:13.4px;background:#a0cbe8"></div></div>
<div class="r" style="left:214px;top:341px;width:13px;padding:1px;background:#d9d9d9;"><div style="height:13.4px;background:#79706e"></div><div style="height:13.4px;background:#9a918e"></div><div style="height:13.4px;background:#bab0ac"></div></div>
<div class="r" style="left:232px;top:294px;width:13px;padding:1px;background:#d9d9d9;"><div style="height:13.4px;background:#637080"></div><div style="height:13.4px;background:#808a93"></div><div style="height:13.4px;background:#a8acab"></div></div>
<div class="r" style="left:232px;top:341px;width:13px;padding:1px;background:#d9d9d9;"><div style="height:13.4px;background:#76b7b2"></div><div style="height:13.4px;background:#ff9da7"></div><div style="height:13.4px;background:#edc948"></div></div>
<div class="t" style="top:390.34px;font-size:12px;color:#222;letter-spacing:-0.35px;left:175.00px;transform:translateX(-50%);">More colors...</div>
<svg class="r" style="left:129px;top:302px;" width="14" height="22" viewBox="0 0 14 22"><path d="M1 1 V17 L4.8 13.4 L7.6 19.6 L10 18.5 L7.3 12.5 L12.5 12.5 Z" fill="#fff" stroke="#111" stroke-width="1" stroke-linejoin="round"/></svg>
</body></html>
